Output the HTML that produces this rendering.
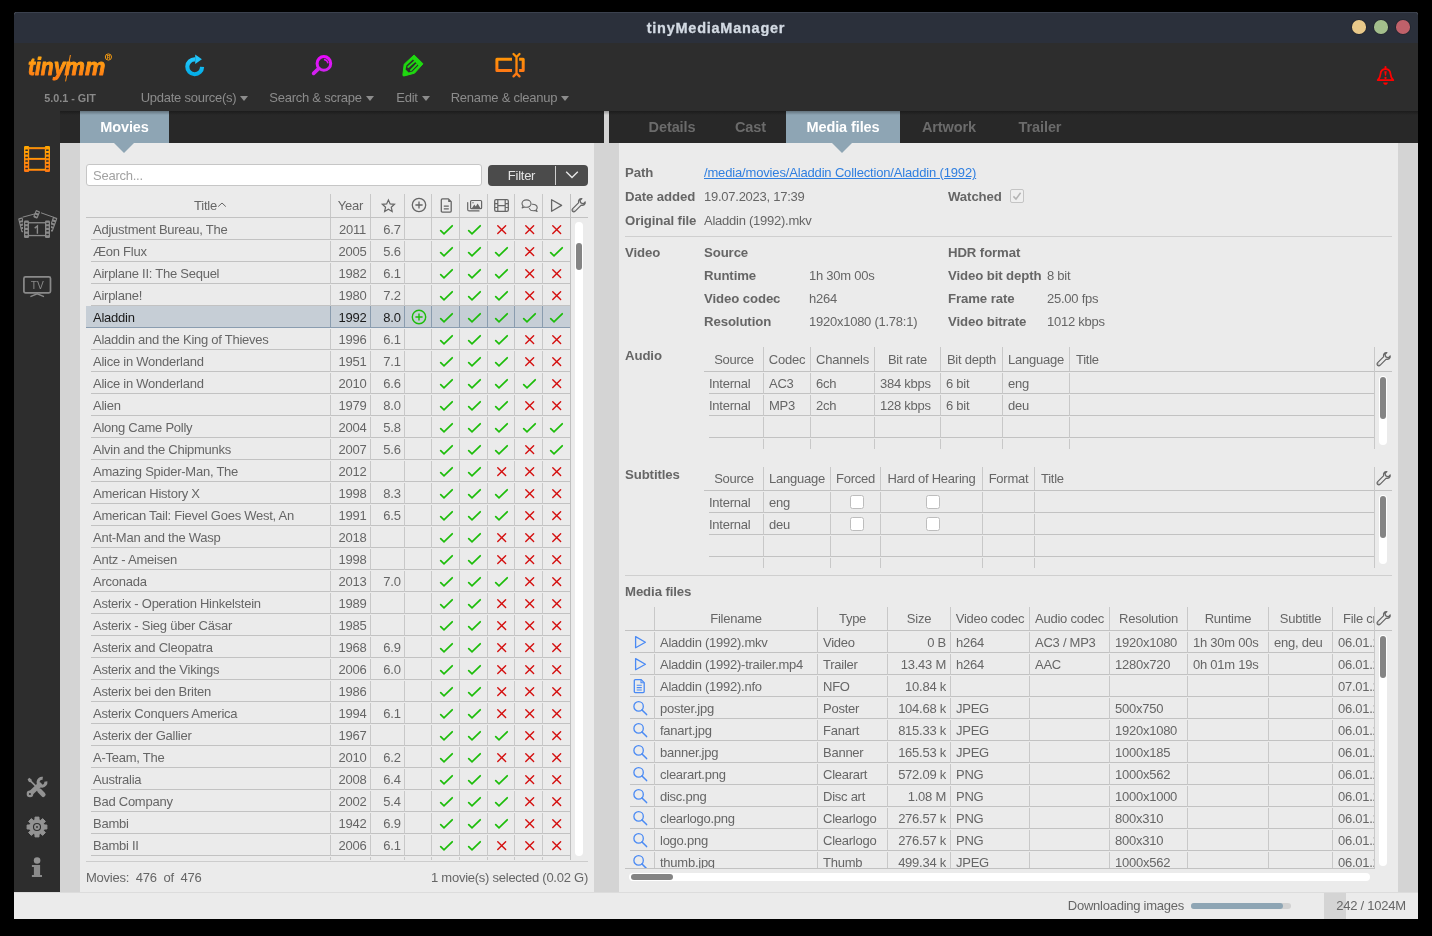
<!DOCTYPE html>
<html><head><meta charset="utf-8"><title>tinyMediaManager</title>
<style>html,body{margin:0;padding:0;background:#000}body{width:1432px;height:936px;position:relative;overflow:hidden;font-family:"Liberation Sans",sans-serif;}#r{position:absolute;left:0;top:0;width:1432px;height:936px;will-change:transform}svg{overflow:visible}</style></head>
<body><div id="r">
<div style="position:absolute;left:14px;top:12px;width:1404px;height:907px;background:#ebebeb;border-radius:3px 3px 0 0;overflow:hidden"></div>
<div style="position:absolute;left:14px;top:12px;width:1404px;height:31px;background:#2b303b;border-radius:3px 3px 0 0;box-shadow:inset 0 1px 0 #3b414e"></div>
<div style="position:absolute;left:14px;top:20px;font-size:14.5px;line-height:16px;height:16px;color:#d3dae3;font-weight:700;white-space:nowrap;letter-spacing:0.75px;width:1404px;text-align:center;overflow:hidden;-webkit-text-stroke:.3px #d3dae3;">tinyMediaManager</div>
<div style="position:absolute;left:1352.2px;top:20.3px;width:13.6px;height:13.6px;border-radius:50%;background:#e9c98a;box-shadow:0 0 0 .8px rgba(0,0,0,.22)"></div>
<div style="position:absolute;left:1374.2px;top:20.3px;width:13.6px;height:13.6px;border-radius:50%;background:#a3be8c;box-shadow:0 0 0 .8px rgba(0,0,0,.22)"></div>
<div style="position:absolute;left:1396.2px;top:20.3px;width:13.6px;height:13.6px;border-radius:50%;background:#bf616a;box-shadow:0 0 0 .8px rgba(0,0,0,.22)"></div>
<div style="position:absolute;left:14px;top:43px;width:1404px;height:68px;background:#2d2d2d;"></div>
<div style="position:absolute;left:60px;top:111px;width:1358px;height:32px;background:#282828;"></div>
<div style="position:absolute;left:14px;top:111px;width:46px;height:781px;background:#2d2d2d;"></div>
<div style="position:absolute;left:60px;top:143px;width:20px;height:749px;background:#d4d4d4;"></div>
<div style="position:absolute;left:594px;top:143px;width:25px;height:749px;background:#d4d4d4;"></div>
<div style="position:absolute;left:1398px;top:143px;width:20px;height:749px;background:#d4d4d4;"></div>
<div style="position:absolute;left:604px;top:111px;width:5px;height:32px;background:#d4d4d4;"></div>
<div style="position:absolute;left:14px;top:892px;width:1404px;height:27px;background:#ebebeb;box-shadow:inset 0 1px 0 #dcdcdc"></div>
<svg style="position:absolute;left:24px;top:48px;" width="96" height="40" viewBox="0 0 96 40"><defs><linearGradient id="lg" x1="0" y1="0" x2="0" y2="1"><stop offset="0.2" stop-color="#ffa412"/><stop offset="0.85" stop-color="#ff7d14"/></linearGradient></defs>
<g font-family="Liberation Sans" font-weight="700" font-style="italic" font-size="24.2" fill="url(#lg)" stroke="url(#lg)" stroke-width=".95" stroke-linejoin="round">
<text x="4" y="27.4" textLength="37.4" lengthAdjust="spacingAndGlyphs">tiny</text>
<text x="40.6" y="27.4" textLength="40.6" lengthAdjust="spacingAndGlyphs">mm</text></g>
<path d="M46.4 7 L41.6 33.4" stroke="#ff8f14" stroke-width="1" fill="none"/>
<circle cx="84.4" cy="9" r="3.1" fill="none" stroke="#f59a10" stroke-width="1"/><text x="82.7" y="10.9" font-family="Liberation Sans" font-size="5" font-weight="700" fill="#f59a10">R</text></svg>
<div style="position:absolute;left:14px;top:92px;font-size:10.8px;line-height:12px;height:12px;color:#8a8a8a;font-weight:700;white-space:nowrap;letter-spacing:0px;width:112px;text-align:center;overflow:hidden;">5.0.1 - GIT</div>
<div style="position:absolute;left:94.5px;top:90px;font-size:13px;line-height:15px;height:15px;color:#8c8c8c;font-weight:400;white-space:nowrap;letter-spacing:-0.25px;width:200px;text-align:center;overflow:hidden;">Update source(s)<span style="display:inline-block;width:0;height:0;border-left:4.9px solid transparent;border-right:4.9px solid transparent;border-top:5.8px solid #8c8c8c;margin-left:4px;vertical-align:0.6px"></span></div>
<div style="position:absolute;left:221.5px;top:90px;font-size:13px;line-height:15px;height:15px;color:#8c8c8c;font-weight:400;white-space:nowrap;letter-spacing:-0.25px;width:200px;text-align:center;overflow:hidden;">Search &amp; scrape<span style="display:inline-block;width:0;height:0;border-left:4.9px solid transparent;border-right:4.9px solid transparent;border-top:5.8px solid #8c8c8c;margin-left:4px;vertical-align:0.6px"></span></div>
<div style="position:absolute;left:313px;top:90px;font-size:13px;line-height:15px;height:15px;color:#8c8c8c;font-weight:400;white-space:nowrap;letter-spacing:-0.25px;width:200px;text-align:center;overflow:hidden;">Edit<span style="display:inline-block;width:0;height:0;border-left:4.9px solid transparent;border-right:4.9px solid transparent;border-top:5.8px solid #8c8c8c;margin-left:4px;vertical-align:0.6px"></span></div>
<div style="position:absolute;left:410px;top:90px;font-size:13px;line-height:15px;height:15px;color:#8c8c8c;font-weight:400;white-space:nowrap;letter-spacing:-0.25px;width:200px;text-align:center;overflow:hidden;">Rename &amp; cleanup<span style="display:inline-block;width:0;height:0;border-left:4.9px solid transparent;border-right:4.9px solid transparent;border-top:5.8px solid #8c8c8c;margin-left:4px;vertical-align:0.6px"></span></div>
<svg style="position:absolute;left:182px;top:52px;" width="28" height="28" viewBox="0 0 28 28"><defs><linearGradient id="gb" x1="0" y1="0" x2="0" y2="1"><stop offset="0" stop-color="#22c6fb"/><stop offset="1" stop-color="#04aee8"/></linearGradient></defs>
<path d="M20.1 14.9 A7.4 7.4 0 1 1 13 7.4" fill="none" stroke="url(#gb)" stroke-width="4.1"/>
<path d="M13.2 2.6 L19.9 7.3 L13.2 12.1 Z" fill="#1fc4fa"/></svg>
<svg style="position:absolute;left:308px;top:50px;" width="30" height="30" viewBox="0 0 30 30"><defs><linearGradient id="gm" x1="0" y1="0" x2="0" y2="1"><stop offset="0" stop-color="#ea08ff"/><stop offset="1" stop-color="#cf22ee"/></linearGradient></defs>
<circle cx="15.9" cy="13.4" r="6.8" fill="none" stroke="url(#gm)" stroke-width="3"/>
<path d="M10.6 18.6 L5.6 23.4" stroke="#d320f0" stroke-width="3.6" stroke-linecap="round" fill="none"/>
<path d="M16.6 9.6 A4 4 0 0 1 19.8 12.6" stroke="#e210fa" stroke-width="1.6" stroke-linecap="round" fill="none"/></svg>
<svg style="position:absolute;left:398px;top:50px;" width="30" height="30" viewBox="0 0 30 30"><path d="M16.1 5 L25 13.8 L16.5 23.2 L6.3 25.9 C5.3 26.2 4.7 25.6 4.9 24.7 L6.2 14.2 Z" fill="#1fd810" stroke="#1fd810" stroke-width="1" stroke-linejoin="round"/>
<path d="M14.9 9.6 L20.4 15.4 L14.4 21.4 L10.6 22.4 L7.6 19.4 L8.4 15.6 Z" fill="#2d2d2d"/>
<path d="M10.2 17 L16.4 11.6 M13 20.2 L18.6 14.4" stroke="#1fd810" stroke-width="1.9" stroke-linecap="round" fill="none"/></svg>
<svg style="position:absolute;left:490px;top:48px;" width="40" height="34" viewBox="0 0 40 34"><defs><linearGradient id="go" x1="0" y1="0" x2="0" y2="1"><stop offset="0" stop-color="#ff9208"/><stop offset="1" stop-color="#ff7a14"/></linearGradient></defs>
<path d="M22 11.3 H6.9 V22.6 H22" fill="none" stroke="url(#go)" stroke-width="3" stroke-linejoin="round"/>
<path d="M27 11.3 H33.2 V22.6 H27" fill="none" stroke="url(#go)" stroke-width="3" stroke-linejoin="round"/>
<path d="M26.5 8 V26" stroke="#2d2d2d" stroke-width="5.2" fill="none"/>
<path d="M23.5 6 L26.5 9 L29.5 6 M26.5 9 V25.5 M23.5 28.4 L26.5 25.4 L29.5 28.4" fill="none" stroke="url(#go)" stroke-width="2.3" stroke-linecap="round" stroke-linejoin="round"/></svg>
<svg style="position:absolute;left:1365px;top:55px;" width="40" height="40" viewBox="0 0 40 40"><path d="M12.7 25.1 C14.5 23.3 15.3 21.6 15.5 19 C15.7 15.9 17.5 14.1 20.5 14.1 C23.5 14.1 25.3 15.9 25.5 19 C25.7 21.6 26.5 23.3 28.3 25.1 Z" fill="none" stroke="#ff0000" stroke-width="1.8" stroke-linejoin="round"/>
<path d="M20.5 11.9 V14" stroke="#ff0000" stroke-width="2" stroke-linecap="round"/>
<path d="M18.1 27.4 H22.9 C22.6 29 21.6 29.8 20.5 29.8 C19.4 29.8 18.4 29 18.1 27.4 Z" fill="#ff0000"/>
<path d="M19.3 16.2 H21.7 L21.1 20.7 H19.9 Z" fill="#ff0000"/><circle cx="20.5" cy="23" r="1.15" fill="#ff0000"/></svg>
<svg style="position:absolute;left:24px;top:146px;" width="26" height="26" viewBox="0 0 26 26"><defs><linearGradient id="gf" x1="0" y1="0" x2="0" y2="1"><stop offset="0" stop-color="#ffa800"/><stop offset="1" stop-color="#ff7712"/></linearGradient></defs>
<rect x="0" y="0" width="5.2" height="26" rx="1.2" fill="url(#gf)"/><rect x="20.8" y="0" width="5.2" height="26" rx="1.2" fill="url(#gf)"/>
<rect x="4" y="1.2" width="18" height="2" fill="url(#gf)"/><rect x="4" y="11.9" width="18" height="2" fill="url(#gf)"/><rect x="4" y="22.8" width="18" height="2" fill="url(#gf)"/><rect x="1.3" y="3.40" width="2.6" height="1.5" rx=".4" fill="#2d2d2d"/><rect x="22.1" y="3.40" width="2.6" height="1.5" rx=".4" fill="#2d2d2d"/><rect x="1.3" y="7.05" width="2.6" height="1.5" rx=".4" fill="#2d2d2d"/><rect x="22.1" y="7.05" width="2.6" height="1.5" rx=".4" fill="#2d2d2d"/><rect x="1.3" y="10.70" width="2.6" height="1.5" rx=".4" fill="#2d2d2d"/><rect x="22.1" y="10.70" width="2.6" height="1.5" rx=".4" fill="#2d2d2d"/><rect x="1.3" y="14.35" width="2.6" height="1.5" rx=".4" fill="#2d2d2d"/><rect x="22.1" y="14.35" width="2.6" height="1.5" rx=".4" fill="#2d2d2d"/><rect x="1.3" y="18.00" width="2.6" height="1.5" rx=".4" fill="#2d2d2d"/><rect x="22.1" y="18.00" width="2.6" height="1.5" rx=".4" fill="#2d2d2d"/><rect x="1.3" y="21.65" width="2.6" height="1.5" rx=".4" fill="#2d2d2d"/><rect x="22.1" y="21.65" width="2.6" height="1.5" rx=".4" fill="#2d2d2d"/></svg>
<svg style="position:absolute;left:16px;top:206px;" width="46" height="36" viewBox="0 0 46 36"><g transform="translate(2,12.4) rotate(-14)"><rect x="0" y="0" width="4.6" height="14.6" rx="1" fill="#8a8a8a"/><rect x="1.1" y="1.30" width="2.4" height="1.4" fill="#2d2d2d"/><rect x="1.1" y="4.70" width="2.4" height="1.4" fill="#2d2d2d"/><rect x="1.1" y="8.10" width="2.4" height="1.4" fill="#2d2d2d"/><rect x="1.1" y="11.50" width="2.4" height="1.4" fill="#2d2d2d"/></g>
<g transform="translate(37.2,10.6) rotate(20)"><rect x="0" y="0" width="4.6" height="14.6" rx="1" fill="#8a8a8a"/><rect x="1.1" y="1.30" width="2.4" height="1.4" fill="#2d2d2d"/><rect x="1.1" y="4.70" width="2.4" height="1.4" fill="#2d2d2d"/><rect x="1.1" y="8.10" width="2.4" height="1.4" fill="#2d2d2d"/><rect x="1.1" y="11.50" width="2.4" height="1.4" fill="#2d2d2d"/></g>
<g transform="translate(20,3.8) rotate(22)"><rect x="0" y="0" width="4.6" height="7.8" rx="1" fill="#8a8a8a"/><rect x="1.1" y="1.30" width="2.4" height="1.4" fill="#2d2d2d"/><rect x="1.1" y="4.70" width="2.4" height="1.4" fill="#2d2d2d"/></g>
<path d="M6.5 11.2 L20 7.6 M25 6.8 L38 11.4" stroke="#8a8a8a" stroke-width="1" fill="none"/>
<g transform="translate(8,14.5)"><rect x="-1" y="-1" width="28" height="19.4" fill="#2d2d2d"/><rect x="0" y="0" width="5" height="17.4" rx="1.2" fill="#8a8a8a"/><rect x="21" y="0" width="5" height="17.4" rx="1.2" fill="#8a8a8a"/><rect x="4" y="1.6" width="18" height="1.3" fill="#8a8a8a"/><rect x="4" y="14.4" width="18" height="1.3" fill="#8a8a8a"/><rect x="1.2" y="2.20" width="2.5" height="1.5" rx=".4" fill="#2d2d2d"/><rect x="22.3" y="2.20" width="2.5" height="1.5" rx=".4" fill="#2d2d2d"/><rect x="1.2" y="5.85" width="2.5" height="1.5" rx=".4" fill="#2d2d2d"/><rect x="22.3" y="5.85" width="2.5" height="1.5" rx=".4" fill="#2d2d2d"/><rect x="1.2" y="9.50" width="2.5" height="1.5" rx=".4" fill="#2d2d2d"/><rect x="22.3" y="9.50" width="2.5" height="1.5" rx=".4" fill="#2d2d2d"/><rect x="1.2" y="13.15" width="2.5" height="1.5" rx=".4" fill="#2d2d2d"/><rect x="22.3" y="13.15" width="2.5" height="1.5" rx=".4" fill="#2d2d2d"/>
<path d="M10.7 7.6 L13.4 5.4 V13.2" fill="none" stroke="#8a8a8a" stroke-width="1.4"/></g></svg>
<svg style="position:absolute;left:20px;top:272px;" width="36" height="30" viewBox="0 0 36 30"><rect x="3.9" y="4.9" width="26.6" height="15.9" rx="1.6" fill="none" stroke="#8a8a8a" stroke-width="1.7"/>
<text x="17.2" y="17.1" text-anchor="middle" font-family="Liberation Sans" font-size="10.2" fill="#8a8a8a">TV</text>
<path d="M17.2 20.8 V22.2 M10.4 24.6 L17.2 21.8 L24 24.6" fill="none" stroke="#8a8a8a" stroke-width="1.3"/></svg>
<svg style="position:absolute;left:24px;top:774px;" width="26" height="26" viewBox="0 0 26 26"><path d="M3.6 5.4 L5.2 3.8 L7.6 5.4 L7.8 7 L12.4 11.6 L11.2 12.8 L6.6 8.2 L5 8 Z" fill="#929292"/>
<path d="M15.4 16.6 L19.3 20.7" stroke="#929292" stroke-width="4.6" stroke-linecap="round" fill="none"/>
<path d="M12.2 13.2 L15.4 16.6" stroke="#929292" stroke-width="2.4" fill="none"/>
<path d="M6.1 19.8 L15.6 10.9" stroke="#929292" stroke-width="4.9" stroke-linecap="round" fill="none"/>
<circle cx="6.0" cy="19.9" r="3.3" fill="#929292"/>
<path d="M21.84 7.52 A3.9 3.9 0 1 1 18.68 4.36" fill="none" stroke="#929292" stroke-width="3.1" stroke-linecap="butt"/>
<circle cx="5.9" cy="20" r="1.05" fill="#2d2d2d"/></svg>
<svg style="position:absolute;left:24px;top:814px;" width="26" height="26" viewBox="0 0 26 26"><polygon points="10.99,3.10 15.01,3.10 15.00,5.77 16.70,6.47 18.58,4.58 21.42,7.42 19.53,9.30 20.23,11.00 22.90,10.99 22.90,15.01 20.23,15.00 19.53,16.70 21.42,18.58 18.58,21.42 16.70,19.53 15.00,20.23 15.01,22.90 10.99,22.90 11.00,20.23 9.30,19.53 7.42,21.42 4.58,18.58 6.47,16.70 5.77,15.00 3.10,15.01 3.10,10.99 5.77,11.00 6.47,9.30 4.58,7.42 7.42,4.58 9.30,6.47 11.00,5.77" fill="#929292" stroke="#929292" stroke-width="1" stroke-linejoin="round"/>
<circle cx="13" cy="13" r="3.5" fill="none" stroke="#2d2d2d" stroke-width="1.1"/><circle cx="13" cy="13" r="0.9" fill="#2d2d2d"/></svg>
<svg style="position:absolute;left:28px;top:855px;" width="20" height="26" viewBox="0 0 20 26"><circle cx="9.1" cy="5.5" r="3.3" fill="#929292"/><path d="M3.9 10.1 H12.1 V19.9 H14 V21.9 H3.9 V19.9 H5.9 V12 H3.9 Z" fill="#8a8a8a"/></svg>
<div style="position:absolute;left:80px;top:111px;width:89px;height:32px;background:#8ea5b4;"></div>
<div style="position:absolute;left:113.8px;top:143px;width:0;height:0;border-left:10px solid transparent;border-right:10px solid transparent;border-top:10px solid #8ea5b4"></div>
<div style="position:absolute;left:80px;top:119px;font-size:14.5px;line-height:16px;height:16px;color:#ffffff;font-weight:700;white-space:nowrap;letter-spacing:-0.1px;width:89px;text-align:center;overflow:hidden;">Movies</div>
<div style="position:absolute;left:629px;top:119px;font-size:14.5px;line-height:16px;height:16px;color:#6b6b6b;font-weight:700;white-space:nowrap;letter-spacing:-0.1px;width:86px;text-align:center;overflow:hidden;">Details</div>
<div style="position:absolute;left:715px;top:119px;font-size:14.5px;line-height:16px;height:16px;color:#6b6b6b;font-weight:700;white-space:nowrap;letter-spacing:-0.1px;width:71px;text-align:center;overflow:hidden;">Cast</div>
<div style="position:absolute;left:786px;top:111px;width:114px;height:32px;background:#8ea5b4;"></div>
<div style="position:absolute;left:832.3px;top:143px;width:0;height:0;border-left:10px solid transparent;border-right:10px solid transparent;border-top:10px solid #8ea5b4"></div>
<div style="position:absolute;left:786px;top:119px;font-size:14.5px;line-height:16px;height:16px;color:#ffffff;font-weight:700;white-space:nowrap;letter-spacing:-0.1px;width:114px;text-align:center;overflow:hidden;">Media files</div>
<div style="position:absolute;left:900px;top:119px;font-size:14.5px;line-height:16px;height:16px;color:#6b6b6b;font-weight:700;white-space:nowrap;letter-spacing:-0.1px;width:98px;text-align:center;overflow:hidden;">Artwork</div>
<div style="position:absolute;left:998px;top:119px;font-size:14.5px;line-height:16px;height:16px;color:#6b6b6b;font-weight:700;white-space:nowrap;letter-spacing:-0.1px;width:84px;text-align:center;overflow:hidden;">Trailer</div>
<div style="position:absolute;left:60px;top:111px;width:1358px;height:4px;background:linear-gradient(rgba(0,0,0,.3),rgba(0,0,0,0))"></div>
<div style="position:absolute;left:86px;top:164px;width:396px;height:22px;box-sizing:border-box;background:#fff;border:1px solid #c6c6c6;border-radius:3px"></div>
<div style="position:absolute;left:93px;top:168px;font-size:13px;line-height:15px;height:15px;color:#a2a2a2;font-weight:400;white-space:nowrap;letter-spacing:-0.25px;">Search...</div>
<div style="position:absolute;left:488px;top:165px;width:100px;height:21px;background:#4b4b4b;border-radius:4px"></div>
<div style="position:absolute;left:555px;top:166px;width:1px;height:19px;background:#cfcfcf;"></div>
<div style="position:absolute;left:488px;top:168px;font-size:13px;line-height:15px;height:15px;color:#e4e4e4;font-weight:400;white-space:nowrap;letter-spacing:-0.25px;width:67px;text-align:center;overflow:hidden;">Filter</div>
<svg style="position:absolute;left:563px;top:168px;" width="18" height="14" viewBox="0 0 18 14"><path d="M3.2 3.8 L9 9.6 L14.8 3.8" fill="none" stroke="#e6e6e6" stroke-width="1.4"/></svg>
<div style="position:absolute;left:86px;top:217px;width:502px;height:1px;background:#c2c2c2;"></div>
<div style="position:absolute;left:330px;top:194px;width:1px;height:23px;background:#c8c8c8;"></div>
<div style="position:absolute;left:370px;top:194px;width:1px;height:23px;background:#c8c8c8;"></div>
<div style="position:absolute;left:404px;top:194px;width:1px;height:23px;background:#c8c8c8;"></div>
<div style="position:absolute;left:431px;top:194px;width:1px;height:23px;background:#c8c8c8;"></div>
<div style="position:absolute;left:459px;top:194px;width:1px;height:23px;background:#c8c8c8;"></div>
<div style="position:absolute;left:487px;top:194px;width:1px;height:23px;background:#c8c8c8;"></div>
<div style="position:absolute;left:514px;top:194px;width:1px;height:23px;background:#c8c8c8;"></div>
<div style="position:absolute;left:542px;top:194px;width:1px;height:23px;background:#c8c8c8;"></div>
<div style="position:absolute;left:570px;top:194px;width:1px;height:23px;background:#c8c8c8;"></div>
<div style="position:absolute;left:88px;top:198px;font-size:13px;line-height:15px;height:15px;color:#666666;font-weight:400;white-space:nowrap;letter-spacing:-0.25px;width:244px;text-align:center;overflow:hidden;">Title<span style="display:inline-block;width:9px"></span></div>
<svg style="position:absolute;left:216.5px;top:200px;" width="10" height="10" viewBox="0 0 10 10"><path d="M1.2 6.6 L5 3 L8.8 6.6" fill="none" stroke="#666666" stroke-width="1"/></svg>
<div style="position:absolute;left:331px;top:198px;font-size:13px;line-height:15px;height:15px;color:#666666;font-weight:400;white-space:nowrap;letter-spacing:-0.25px;width:39px;text-align:center;overflow:hidden;">Year</div>
<svg style="position:absolute;left:379px;top:196px;" width="18" height="18" viewBox="0 0 18 18"><polygon points="9.40,3.90 11.16,7.87 15.49,8.32 12.25,11.23 13.16,15.48 9.40,13.30 5.64,15.48 6.55,11.23 3.31,8.32 7.64,7.87" fill="none" stroke="#666666" stroke-width="1.2" stroke-linejoin="miter"/></svg>
<svg style="position:absolute;left:409.5px;top:196.4px;" width="18" height="18" viewBox="0 0 18 18"><circle cx="9" cy="9" r="6.7" fill="none" stroke="#666666" stroke-width="1.3"/><path d="M5.4 9H12.6M9 5.4V12.6" stroke="#666666" stroke-width="1.3" fill="none"/></svg>
<svg style="position:absolute;left:439px;top:196px;" width="16" height="18" viewBox="0 0 16 18"><path d="M3.4 2.9 H9.4 L12.2 5.7 V15 C12.2 15.7 11.8 16.1 11.1 16.1 H3.4 C2.7 16.1 2.3 15.7 2.3 15 V4 C2.3 3.3 2.7 2.9 3.4 2.9 Z" fill="none" stroke="#666666" stroke-width="1.3" stroke-linejoin="round"/><path d="M9.2 2.9 V6 H12.2 Z" fill="#666666"/><path d="M4.8 10.2 H9.8 M4.8 12.9 H9.8" stroke="#666666" stroke-width="1.3"/></svg>
<svg style="position:absolute;left:465px;top:197px;" width="20" height="17" viewBox="0 0 20 17"><rect x="5.6" y="3.5" width="11" height="8.2" rx="1" fill="none" stroke="#666666" stroke-width="1.2"/><path d="M7 10.9 L9.3 7.6 L10.8 9.4 L12.6 6.6 L15.4 10.9 Z" fill="#666666"/><circle cx="8" cy="5.8" r=".7" fill="#666666"/><path d="M2.7 5.6 V12.4 C2.7 13.4 3.3 13.9 4.2 13.9 H14" fill="none" stroke="#666666" stroke-width="1.2" stroke-linecap="round"/></svg>
<svg style="position:absolute;left:492px;top:197px;" width="19" height="17" viewBox="0 0 19 17"><rect x="2.7" y="2.7" width="13.6" height="11.7" rx="1.4" fill="none" stroke="#666666" stroke-width="1.3"/><path d="M5.8 2.7 V14.4 M13.2 2.7 V14.4 M2.7 6.6 H5.8 M2.7 10.5 H5.8 M13.2 6.6 H16.3 M13.2 10.5 H16.3 M5.8 8.55 H13.2" stroke="#666666" stroke-width="1.2" fill="none"/></svg>
<svg style="position:absolute;left:519px;top:197px;" width="22" height="18" viewBox="0 0 22 18"><path d="M7.5 2.9 C10 2.9 12 4.5 12 6.6 C12 8.7 10 10.3 7.5 10.3 C6.7 10.3 6 10.2 5.4 9.9 L3.1 10.9 L4.1 9 C3.4 8.4 3 7.5 3 6.6 C3 4.5 5 2.9 7.5 2.9 Z" fill="none" stroke="#666666" stroke-width="1.1" stroke-linejoin="round"/><path d="M13.2 7.2 C15.8 7 18.2 8.4 18.2 10.5 C18.2 11.4 17.8 12.2 17.2 12.7 L18.1 14.5 L15.9 13.6 C15.4 13.8 14.9 13.8 14.4 13.8 C12.6 13.8 11 13 10.4 11.6" fill="none" stroke="#666666" stroke-width="1.1" stroke-linejoin="round" stroke-linecap="round"/></svg>
<svg style="position:absolute;left:547px;top:196px;" width="18" height="18" viewBox="0 0 18 18"><path d="M4.6 3.7 L14.6 9.4 L4.6 15.2 Z" fill="none" stroke="#666666" stroke-width="1.3" stroke-linejoin="round"/></svg>
<svg style="position:absolute;left:571.3px;top:196.9px;" width="16" height="16" viewBox="0 0 16 16"><path d="M10.9 1.6 C8.6 1.2 6.9 3.4 7.7 5.6 L1.7 11.6 C0.9 12.4 0.9 13.5 1.6 14.2 C2.3 14.9 3.4 14.9 4.2 14.1 L10.2 8.1 C12.4 8.9 14.6 7.2 14.2 4.9 L12.2 6.9 L9.9 5.9 L8.9 3.6 Z" fill="none" stroke="#666666" stroke-width="1.25" stroke-linejoin="round"/><circle cx="2.9" cy="12.9" r="0.5" fill="#666666"/></svg>
<div style="position:absolute;left:91px;top:239px;width:479px;height:1px;background:#c2c2c2;"></div>
<div style="position:absolute;left:330px;top:218px;width:1px;height:22px;background:#c8c8c8;"></div>
<div style="position:absolute;left:370px;top:218px;width:1px;height:22px;background:#c8c8c8;"></div>
<div style="position:absolute;left:404px;top:218px;width:1px;height:22px;background:#c8c8c8;"></div>
<div style="position:absolute;left:431px;top:218px;width:1px;height:22px;background:#c8c8c8;"></div>
<div style="position:absolute;left:459px;top:218px;width:1px;height:22px;background:#c8c8c8;"></div>
<div style="position:absolute;left:487px;top:218px;width:1px;height:22px;background:#c8c8c8;"></div>
<div style="position:absolute;left:514px;top:218px;width:1px;height:22px;background:#c8c8c8;"></div>
<div style="position:absolute;left:542px;top:218px;width:1px;height:22px;background:#c8c8c8;"></div>
<div style="position:absolute;left:93px;top:222px;font-size:13px;line-height:15px;height:15px;color:#666666;font-weight:400;white-space:nowrap;letter-spacing:-0.25px;width:236px;text-align:left;overflow:hidden;">Adjustment Bureau, The</div>
<div style="position:absolute;left:333px;top:222px;font-size:13px;line-height:15px;height:15px;color:#666666;font-weight:400;white-space:nowrap;letter-spacing:-0.25px;width:39px;text-align:center;overflow:hidden;">2011</div>
<div style="position:absolute;left:371px;top:222px;font-size:13px;line-height:15px;height:15px;color:#666666;font-weight:400;white-space:nowrap;letter-spacing:-0.25px;width:33px;text-align:center;overflow:hidden;padding-left:9px;box-sizing:border-box;">6.7</div>
<svg style="position:absolute;left:439px;top:218px" width="16" height="22" viewBox="0 0 16 22"><path d="M1.7 12.7 L5 15.8 L13.2 7.8" fill="none" stroke="#1cbd0a" stroke-width="1.75" stroke-linecap="round" stroke-linejoin="miter"/></svg>
<svg style="position:absolute;left:467px;top:218px" width="16" height="22" viewBox="0 0 16 22"><path d="M1.7 12.7 L5 15.8 L13.2 7.8" fill="none" stroke="#1cbd0a" stroke-width="1.75" stroke-linecap="round" stroke-linejoin="miter"/></svg>
<svg style="position:absolute;left:494px;top:218px" width="16" height="22" viewBox="0 0 16 22"><path d="M3.75 7.65 L11.65 15.55 M11.65 7.65 L3.75 15.55" fill="none" stroke="#d40f0f" stroke-width="1.4" stroke-linecap="round"/></svg>
<svg style="position:absolute;left:522px;top:218px" width="16" height="22" viewBox="0 0 16 22"><path d="M3.75 7.65 L11.65 15.55 M11.65 7.65 L3.75 15.55" fill="none" stroke="#d40f0f" stroke-width="1.4" stroke-linecap="round"/></svg>
<svg style="position:absolute;left:549px;top:218px" width="16" height="22" viewBox="0 0 16 22"><path d="M3.75 7.65 L11.65 15.55 M11.65 7.65 L3.75 15.55" fill="none" stroke="#d40f0f" stroke-width="1.4" stroke-linecap="round"/></svg>
<div style="position:absolute;left:91px;top:261px;width:479px;height:1px;background:#c2c2c2;"></div>
<div style="position:absolute;left:330px;top:241px;width:1px;height:21px;background:#c8c8c8;"></div>
<div style="position:absolute;left:370px;top:241px;width:1px;height:21px;background:#c8c8c8;"></div>
<div style="position:absolute;left:404px;top:241px;width:1px;height:21px;background:#c8c8c8;"></div>
<div style="position:absolute;left:431px;top:241px;width:1px;height:21px;background:#c8c8c8;"></div>
<div style="position:absolute;left:459px;top:241px;width:1px;height:21px;background:#c8c8c8;"></div>
<div style="position:absolute;left:487px;top:241px;width:1px;height:21px;background:#c8c8c8;"></div>
<div style="position:absolute;left:514px;top:241px;width:1px;height:21px;background:#c8c8c8;"></div>
<div style="position:absolute;left:542px;top:241px;width:1px;height:21px;background:#c8c8c8;"></div>
<div style="position:absolute;left:93px;top:244px;font-size:13px;line-height:15px;height:15px;color:#666666;font-weight:400;white-space:nowrap;letter-spacing:-0.25px;width:236px;text-align:left;overflow:hidden;">Æon Flux</div>
<div style="position:absolute;left:333px;top:244px;font-size:13px;line-height:15px;height:15px;color:#666666;font-weight:400;white-space:nowrap;letter-spacing:-0.25px;width:39px;text-align:center;overflow:hidden;">2005</div>
<div style="position:absolute;left:371px;top:244px;font-size:13px;line-height:15px;height:15px;color:#666666;font-weight:400;white-space:nowrap;letter-spacing:-0.25px;width:33px;text-align:center;overflow:hidden;padding-left:9px;box-sizing:border-box;">5.6</div>
<svg style="position:absolute;left:439px;top:240px" width="16" height="22" viewBox="0 0 16 22"><path d="M1.7 12.7 L5 15.8 L13.2 7.8" fill="none" stroke="#1cbd0a" stroke-width="1.75" stroke-linecap="round" stroke-linejoin="miter"/></svg>
<svg style="position:absolute;left:467px;top:240px" width="16" height="22" viewBox="0 0 16 22"><path d="M1.7 12.7 L5 15.8 L13.2 7.8" fill="none" stroke="#1cbd0a" stroke-width="1.75" stroke-linecap="round" stroke-linejoin="miter"/></svg>
<svg style="position:absolute;left:494px;top:240px" width="16" height="22" viewBox="0 0 16 22"><path d="M1.7 12.7 L5 15.8 L13.2 7.8" fill="none" stroke="#1cbd0a" stroke-width="1.75" stroke-linecap="round" stroke-linejoin="miter"/></svg>
<svg style="position:absolute;left:522px;top:240px" width="16" height="22" viewBox="0 0 16 22"><path d="M3.75 7.65 L11.65 15.55 M11.65 7.65 L3.75 15.55" fill="none" stroke="#d40f0f" stroke-width="1.4" stroke-linecap="round"/></svg>
<svg style="position:absolute;left:549px;top:240px" width="16" height="22" viewBox="0 0 16 22"><path d="M1.7 12.7 L5 15.8 L13.2 7.8" fill="none" stroke="#1cbd0a" stroke-width="1.75" stroke-linecap="round" stroke-linejoin="miter"/></svg>
<div style="position:absolute;left:91px;top:283px;width:479px;height:1px;background:#c2c2c2;"></div>
<div style="position:absolute;left:330px;top:263px;width:1px;height:21px;background:#c8c8c8;"></div>
<div style="position:absolute;left:370px;top:263px;width:1px;height:21px;background:#c8c8c8;"></div>
<div style="position:absolute;left:404px;top:263px;width:1px;height:21px;background:#c8c8c8;"></div>
<div style="position:absolute;left:431px;top:263px;width:1px;height:21px;background:#c8c8c8;"></div>
<div style="position:absolute;left:459px;top:263px;width:1px;height:21px;background:#c8c8c8;"></div>
<div style="position:absolute;left:487px;top:263px;width:1px;height:21px;background:#c8c8c8;"></div>
<div style="position:absolute;left:514px;top:263px;width:1px;height:21px;background:#c8c8c8;"></div>
<div style="position:absolute;left:542px;top:263px;width:1px;height:21px;background:#c8c8c8;"></div>
<div style="position:absolute;left:93px;top:266px;font-size:13px;line-height:15px;height:15px;color:#666666;font-weight:400;white-space:nowrap;letter-spacing:-0.25px;width:236px;text-align:left;overflow:hidden;">Airplane II: The Sequel</div>
<div style="position:absolute;left:333px;top:266px;font-size:13px;line-height:15px;height:15px;color:#666666;font-weight:400;white-space:nowrap;letter-spacing:-0.25px;width:39px;text-align:center;overflow:hidden;">1982</div>
<div style="position:absolute;left:371px;top:266px;font-size:13px;line-height:15px;height:15px;color:#666666;font-weight:400;white-space:nowrap;letter-spacing:-0.25px;width:33px;text-align:center;overflow:hidden;padding-left:9px;box-sizing:border-box;">6.1</div>
<svg style="position:absolute;left:439px;top:262px" width="16" height="22" viewBox="0 0 16 22"><path d="M1.7 12.7 L5 15.8 L13.2 7.8" fill="none" stroke="#1cbd0a" stroke-width="1.75" stroke-linecap="round" stroke-linejoin="miter"/></svg>
<svg style="position:absolute;left:467px;top:262px" width="16" height="22" viewBox="0 0 16 22"><path d="M1.7 12.7 L5 15.8 L13.2 7.8" fill="none" stroke="#1cbd0a" stroke-width="1.75" stroke-linecap="round" stroke-linejoin="miter"/></svg>
<svg style="position:absolute;left:494px;top:262px" width="16" height="22" viewBox="0 0 16 22"><path d="M1.7 12.7 L5 15.8 L13.2 7.8" fill="none" stroke="#1cbd0a" stroke-width="1.75" stroke-linecap="round" stroke-linejoin="miter"/></svg>
<svg style="position:absolute;left:522px;top:262px" width="16" height="22" viewBox="0 0 16 22"><path d="M3.75 7.65 L11.65 15.55 M11.65 7.65 L3.75 15.55" fill="none" stroke="#d40f0f" stroke-width="1.4" stroke-linecap="round"/></svg>
<svg style="position:absolute;left:549px;top:262px" width="16" height="22" viewBox="0 0 16 22"><path d="M3.75 7.65 L11.65 15.55 M11.65 7.65 L3.75 15.55" fill="none" stroke="#d40f0f" stroke-width="1.4" stroke-linecap="round"/></svg>
<div style="position:absolute;left:91px;top:305px;width:479px;height:1px;background:#c2c2c2;"></div>
<div style="position:absolute;left:330px;top:285px;width:1px;height:21px;background:#c8c8c8;"></div>
<div style="position:absolute;left:370px;top:285px;width:1px;height:21px;background:#c8c8c8;"></div>
<div style="position:absolute;left:404px;top:285px;width:1px;height:21px;background:#c8c8c8;"></div>
<div style="position:absolute;left:431px;top:285px;width:1px;height:21px;background:#c8c8c8;"></div>
<div style="position:absolute;left:459px;top:285px;width:1px;height:21px;background:#c8c8c8;"></div>
<div style="position:absolute;left:487px;top:285px;width:1px;height:21px;background:#c8c8c8;"></div>
<div style="position:absolute;left:514px;top:285px;width:1px;height:21px;background:#c8c8c8;"></div>
<div style="position:absolute;left:542px;top:285px;width:1px;height:21px;background:#c8c8c8;"></div>
<div style="position:absolute;left:93px;top:288px;font-size:13px;line-height:15px;height:15px;color:#666666;font-weight:400;white-space:nowrap;letter-spacing:-0.25px;width:236px;text-align:left;overflow:hidden;">Airplane!</div>
<div style="position:absolute;left:333px;top:288px;font-size:13px;line-height:15px;height:15px;color:#666666;font-weight:400;white-space:nowrap;letter-spacing:-0.25px;width:39px;text-align:center;overflow:hidden;">1980</div>
<div style="position:absolute;left:371px;top:288px;font-size:13px;line-height:15px;height:15px;color:#666666;font-weight:400;white-space:nowrap;letter-spacing:-0.25px;width:33px;text-align:center;overflow:hidden;padding-left:9px;box-sizing:border-box;">7.2</div>
<svg style="position:absolute;left:439px;top:284px" width="16" height="22" viewBox="0 0 16 22"><path d="M1.7 12.7 L5 15.8 L13.2 7.8" fill="none" stroke="#1cbd0a" stroke-width="1.75" stroke-linecap="round" stroke-linejoin="miter"/></svg>
<svg style="position:absolute;left:467px;top:284px" width="16" height="22" viewBox="0 0 16 22"><path d="M1.7 12.7 L5 15.8 L13.2 7.8" fill="none" stroke="#1cbd0a" stroke-width="1.75" stroke-linecap="round" stroke-linejoin="miter"/></svg>
<svg style="position:absolute;left:494px;top:284px" width="16" height="22" viewBox="0 0 16 22"><path d="M1.7 12.7 L5 15.8 L13.2 7.8" fill="none" stroke="#1cbd0a" stroke-width="1.75" stroke-linecap="round" stroke-linejoin="miter"/></svg>
<svg style="position:absolute;left:522px;top:284px" width="16" height="22" viewBox="0 0 16 22"><path d="M3.75 7.65 L11.65 15.55 M11.65 7.65 L3.75 15.55" fill="none" stroke="#d40f0f" stroke-width="1.4" stroke-linecap="round"/></svg>
<svg style="position:absolute;left:549px;top:284px" width="16" height="22" viewBox="0 0 16 22"><path d="M3.75 7.65 L11.65 15.55 M11.65 7.65 L3.75 15.55" fill="none" stroke="#d40f0f" stroke-width="1.4" stroke-linecap="round"/></svg>
<div style="position:absolute;left:86px;top:306px;width:484px;height:21px;background:#c6ced6;"></div>
<div style="position:absolute;left:86px;top:327px;width:484px;height:1px;background:#8a9db0;"></div>
<div style="position:absolute;left:330px;top:306px;width:1px;height:22px;background:#8a9cae;"></div>
<div style="position:absolute;left:370px;top:306px;width:1px;height:22px;background:#8a9cae;"></div>
<div style="position:absolute;left:404px;top:306px;width:1px;height:22px;background:#8a9cae;"></div>
<div style="position:absolute;left:431px;top:306px;width:1px;height:22px;background:#8a9cae;"></div>
<div style="position:absolute;left:459px;top:306px;width:1px;height:22px;background:#8a9cae;"></div>
<div style="position:absolute;left:487px;top:306px;width:1px;height:22px;background:#8a9cae;"></div>
<div style="position:absolute;left:514px;top:306px;width:1px;height:22px;background:#8a9cae;"></div>
<div style="position:absolute;left:542px;top:306px;width:1px;height:22px;background:#8a9cae;"></div>
<div style="position:absolute;left:93px;top:310px;font-size:13px;line-height:15px;height:15px;color:#1a1a1a;font-weight:400;white-space:nowrap;letter-spacing:-0.25px;width:236px;text-align:left;overflow:hidden;">Aladdin</div>
<div style="position:absolute;left:333px;top:310px;font-size:13px;line-height:15px;height:15px;color:#1a1a1a;font-weight:400;white-space:nowrap;letter-spacing:-0.25px;width:39px;text-align:center;overflow:hidden;">1992</div>
<div style="position:absolute;left:371px;top:310px;font-size:13px;line-height:15px;height:15px;color:#1a1a1a;font-weight:400;white-space:nowrap;letter-spacing:-0.25px;width:33px;text-align:center;overflow:hidden;padding-left:9px;box-sizing:border-box;">8.0</div>
<svg style="position:absolute;left:409.5px;top:308.3px;" width="18" height="18" viewBox="0 0 18 18"><circle cx="9" cy="9" r="6.7" fill="none" stroke="#1cbd0a" stroke-width="1.4"/><path d="M5.4 9H12.6M9 5.4V12.6" stroke="#1cbd0a" stroke-width="1.4" fill="none"/></svg>
<svg style="position:absolute;left:439px;top:306px" width="16" height="22" viewBox="0 0 16 22"><path d="M1.7 12.7 L5 15.8 L13.2 7.8" fill="none" stroke="#1cbd0a" stroke-width="1.75" stroke-linecap="round" stroke-linejoin="miter"/></svg>
<svg style="position:absolute;left:467px;top:306px" width="16" height="22" viewBox="0 0 16 22"><path d="M1.7 12.7 L5 15.8 L13.2 7.8" fill="none" stroke="#1cbd0a" stroke-width="1.75" stroke-linecap="round" stroke-linejoin="miter"/></svg>
<svg style="position:absolute;left:494px;top:306px" width="16" height="22" viewBox="0 0 16 22"><path d="M1.7 12.7 L5 15.8 L13.2 7.8" fill="none" stroke="#1cbd0a" stroke-width="1.75" stroke-linecap="round" stroke-linejoin="miter"/></svg>
<svg style="position:absolute;left:522px;top:306px" width="16" height="22" viewBox="0 0 16 22"><path d="M1.7 12.7 L5 15.8 L13.2 7.8" fill="none" stroke="#1cbd0a" stroke-width="1.75" stroke-linecap="round" stroke-linejoin="miter"/></svg>
<svg style="position:absolute;left:549px;top:306px" width="16" height="22" viewBox="0 0 16 22"><path d="M1.7 12.7 L5 15.8 L13.2 7.8" fill="none" stroke="#1cbd0a" stroke-width="1.75" stroke-linecap="round" stroke-linejoin="miter"/></svg>
<div style="position:absolute;left:91px;top:349px;width:479px;height:1px;background:#c2c2c2;"></div>
<div style="position:absolute;left:330px;top:329px;width:1px;height:21px;background:#c8c8c8;"></div>
<div style="position:absolute;left:370px;top:329px;width:1px;height:21px;background:#c8c8c8;"></div>
<div style="position:absolute;left:404px;top:329px;width:1px;height:21px;background:#c8c8c8;"></div>
<div style="position:absolute;left:431px;top:329px;width:1px;height:21px;background:#c8c8c8;"></div>
<div style="position:absolute;left:459px;top:329px;width:1px;height:21px;background:#c8c8c8;"></div>
<div style="position:absolute;left:487px;top:329px;width:1px;height:21px;background:#c8c8c8;"></div>
<div style="position:absolute;left:514px;top:329px;width:1px;height:21px;background:#c8c8c8;"></div>
<div style="position:absolute;left:542px;top:329px;width:1px;height:21px;background:#c8c8c8;"></div>
<div style="position:absolute;left:93px;top:332px;font-size:13px;line-height:15px;height:15px;color:#666666;font-weight:400;white-space:nowrap;letter-spacing:-0.25px;width:236px;text-align:left;overflow:hidden;">Aladdin and the King of Thieves</div>
<div style="position:absolute;left:333px;top:332px;font-size:13px;line-height:15px;height:15px;color:#666666;font-weight:400;white-space:nowrap;letter-spacing:-0.25px;width:39px;text-align:center;overflow:hidden;">1996</div>
<div style="position:absolute;left:371px;top:332px;font-size:13px;line-height:15px;height:15px;color:#666666;font-weight:400;white-space:nowrap;letter-spacing:-0.25px;width:33px;text-align:center;overflow:hidden;padding-left:9px;box-sizing:border-box;">6.1</div>
<svg style="position:absolute;left:439px;top:328px" width="16" height="22" viewBox="0 0 16 22"><path d="M1.7 12.7 L5 15.8 L13.2 7.8" fill="none" stroke="#1cbd0a" stroke-width="1.75" stroke-linecap="round" stroke-linejoin="miter"/></svg>
<svg style="position:absolute;left:467px;top:328px" width="16" height="22" viewBox="0 0 16 22"><path d="M1.7 12.7 L5 15.8 L13.2 7.8" fill="none" stroke="#1cbd0a" stroke-width="1.75" stroke-linecap="round" stroke-linejoin="miter"/></svg>
<svg style="position:absolute;left:494px;top:328px" width="16" height="22" viewBox="0 0 16 22"><path d="M1.7 12.7 L5 15.8 L13.2 7.8" fill="none" stroke="#1cbd0a" stroke-width="1.75" stroke-linecap="round" stroke-linejoin="miter"/></svg>
<svg style="position:absolute;left:522px;top:328px" width="16" height="22" viewBox="0 0 16 22"><path d="M3.75 7.65 L11.65 15.55 M11.65 7.65 L3.75 15.55" fill="none" stroke="#d40f0f" stroke-width="1.4" stroke-linecap="round"/></svg>
<svg style="position:absolute;left:549px;top:328px" width="16" height="22" viewBox="0 0 16 22"><path d="M3.75 7.65 L11.65 15.55 M11.65 7.65 L3.75 15.55" fill="none" stroke="#d40f0f" stroke-width="1.4" stroke-linecap="round"/></svg>
<div style="position:absolute;left:91px;top:371px;width:479px;height:1px;background:#c2c2c2;"></div>
<div style="position:absolute;left:330px;top:351px;width:1px;height:21px;background:#c8c8c8;"></div>
<div style="position:absolute;left:370px;top:351px;width:1px;height:21px;background:#c8c8c8;"></div>
<div style="position:absolute;left:404px;top:351px;width:1px;height:21px;background:#c8c8c8;"></div>
<div style="position:absolute;left:431px;top:351px;width:1px;height:21px;background:#c8c8c8;"></div>
<div style="position:absolute;left:459px;top:351px;width:1px;height:21px;background:#c8c8c8;"></div>
<div style="position:absolute;left:487px;top:351px;width:1px;height:21px;background:#c8c8c8;"></div>
<div style="position:absolute;left:514px;top:351px;width:1px;height:21px;background:#c8c8c8;"></div>
<div style="position:absolute;left:542px;top:351px;width:1px;height:21px;background:#c8c8c8;"></div>
<div style="position:absolute;left:93px;top:354px;font-size:13px;line-height:15px;height:15px;color:#666666;font-weight:400;white-space:nowrap;letter-spacing:-0.25px;width:236px;text-align:left;overflow:hidden;">Alice in Wonderland</div>
<div style="position:absolute;left:333px;top:354px;font-size:13px;line-height:15px;height:15px;color:#666666;font-weight:400;white-space:nowrap;letter-spacing:-0.25px;width:39px;text-align:center;overflow:hidden;">1951</div>
<div style="position:absolute;left:371px;top:354px;font-size:13px;line-height:15px;height:15px;color:#666666;font-weight:400;white-space:nowrap;letter-spacing:-0.25px;width:33px;text-align:center;overflow:hidden;padding-left:9px;box-sizing:border-box;">7.1</div>
<svg style="position:absolute;left:439px;top:350px" width="16" height="22" viewBox="0 0 16 22"><path d="M1.7 12.7 L5 15.8 L13.2 7.8" fill="none" stroke="#1cbd0a" stroke-width="1.75" stroke-linecap="round" stroke-linejoin="miter"/></svg>
<svg style="position:absolute;left:467px;top:350px" width="16" height="22" viewBox="0 0 16 22"><path d="M1.7 12.7 L5 15.8 L13.2 7.8" fill="none" stroke="#1cbd0a" stroke-width="1.75" stroke-linecap="round" stroke-linejoin="miter"/></svg>
<svg style="position:absolute;left:494px;top:350px" width="16" height="22" viewBox="0 0 16 22"><path d="M1.7 12.7 L5 15.8 L13.2 7.8" fill="none" stroke="#1cbd0a" stroke-width="1.75" stroke-linecap="round" stroke-linejoin="miter"/></svg>
<svg style="position:absolute;left:522px;top:350px" width="16" height="22" viewBox="0 0 16 22"><path d="M3.75 7.65 L11.65 15.55 M11.65 7.65 L3.75 15.55" fill="none" stroke="#d40f0f" stroke-width="1.4" stroke-linecap="round"/></svg>
<svg style="position:absolute;left:549px;top:350px" width="16" height="22" viewBox="0 0 16 22"><path d="M3.75 7.65 L11.65 15.55 M11.65 7.65 L3.75 15.55" fill="none" stroke="#d40f0f" stroke-width="1.4" stroke-linecap="round"/></svg>
<div style="position:absolute;left:91px;top:393px;width:479px;height:1px;background:#c2c2c2;"></div>
<div style="position:absolute;left:330px;top:373px;width:1px;height:21px;background:#c8c8c8;"></div>
<div style="position:absolute;left:370px;top:373px;width:1px;height:21px;background:#c8c8c8;"></div>
<div style="position:absolute;left:404px;top:373px;width:1px;height:21px;background:#c8c8c8;"></div>
<div style="position:absolute;left:431px;top:373px;width:1px;height:21px;background:#c8c8c8;"></div>
<div style="position:absolute;left:459px;top:373px;width:1px;height:21px;background:#c8c8c8;"></div>
<div style="position:absolute;left:487px;top:373px;width:1px;height:21px;background:#c8c8c8;"></div>
<div style="position:absolute;left:514px;top:373px;width:1px;height:21px;background:#c8c8c8;"></div>
<div style="position:absolute;left:542px;top:373px;width:1px;height:21px;background:#c8c8c8;"></div>
<div style="position:absolute;left:93px;top:376px;font-size:13px;line-height:15px;height:15px;color:#666666;font-weight:400;white-space:nowrap;letter-spacing:-0.25px;width:236px;text-align:left;overflow:hidden;">Alice in Wonderland</div>
<div style="position:absolute;left:333px;top:376px;font-size:13px;line-height:15px;height:15px;color:#666666;font-weight:400;white-space:nowrap;letter-spacing:-0.25px;width:39px;text-align:center;overflow:hidden;">2010</div>
<div style="position:absolute;left:371px;top:376px;font-size:13px;line-height:15px;height:15px;color:#666666;font-weight:400;white-space:nowrap;letter-spacing:-0.25px;width:33px;text-align:center;overflow:hidden;padding-left:9px;box-sizing:border-box;">6.6</div>
<svg style="position:absolute;left:439px;top:372px" width="16" height="22" viewBox="0 0 16 22"><path d="M1.7 12.7 L5 15.8 L13.2 7.8" fill="none" stroke="#1cbd0a" stroke-width="1.75" stroke-linecap="round" stroke-linejoin="miter"/></svg>
<svg style="position:absolute;left:467px;top:372px" width="16" height="22" viewBox="0 0 16 22"><path d="M1.7 12.7 L5 15.8 L13.2 7.8" fill="none" stroke="#1cbd0a" stroke-width="1.75" stroke-linecap="round" stroke-linejoin="miter"/></svg>
<svg style="position:absolute;left:494px;top:372px" width="16" height="22" viewBox="0 0 16 22"><path d="M1.7 12.7 L5 15.8 L13.2 7.8" fill="none" stroke="#1cbd0a" stroke-width="1.75" stroke-linecap="round" stroke-linejoin="miter"/></svg>
<svg style="position:absolute;left:522px;top:372px" width="16" height="22" viewBox="0 0 16 22"><path d="M1.7 12.7 L5 15.8 L13.2 7.8" fill="none" stroke="#1cbd0a" stroke-width="1.75" stroke-linecap="round" stroke-linejoin="miter"/></svg>
<svg style="position:absolute;left:549px;top:372px" width="16" height="22" viewBox="0 0 16 22"><path d="M3.75 7.65 L11.65 15.55 M11.65 7.65 L3.75 15.55" fill="none" stroke="#d40f0f" stroke-width="1.4" stroke-linecap="round"/></svg>
<div style="position:absolute;left:91px;top:415px;width:479px;height:1px;background:#c2c2c2;"></div>
<div style="position:absolute;left:330px;top:395px;width:1px;height:21px;background:#c8c8c8;"></div>
<div style="position:absolute;left:370px;top:395px;width:1px;height:21px;background:#c8c8c8;"></div>
<div style="position:absolute;left:404px;top:395px;width:1px;height:21px;background:#c8c8c8;"></div>
<div style="position:absolute;left:431px;top:395px;width:1px;height:21px;background:#c8c8c8;"></div>
<div style="position:absolute;left:459px;top:395px;width:1px;height:21px;background:#c8c8c8;"></div>
<div style="position:absolute;left:487px;top:395px;width:1px;height:21px;background:#c8c8c8;"></div>
<div style="position:absolute;left:514px;top:395px;width:1px;height:21px;background:#c8c8c8;"></div>
<div style="position:absolute;left:542px;top:395px;width:1px;height:21px;background:#c8c8c8;"></div>
<div style="position:absolute;left:93px;top:398px;font-size:13px;line-height:15px;height:15px;color:#666666;font-weight:400;white-space:nowrap;letter-spacing:-0.25px;width:236px;text-align:left;overflow:hidden;">Alien</div>
<div style="position:absolute;left:333px;top:398px;font-size:13px;line-height:15px;height:15px;color:#666666;font-weight:400;white-space:nowrap;letter-spacing:-0.25px;width:39px;text-align:center;overflow:hidden;">1979</div>
<div style="position:absolute;left:371px;top:398px;font-size:13px;line-height:15px;height:15px;color:#666666;font-weight:400;white-space:nowrap;letter-spacing:-0.25px;width:33px;text-align:center;overflow:hidden;padding-left:9px;box-sizing:border-box;">8.0</div>
<svg style="position:absolute;left:439px;top:394px" width="16" height="22" viewBox="0 0 16 22"><path d="M1.7 12.7 L5 15.8 L13.2 7.8" fill="none" stroke="#1cbd0a" stroke-width="1.75" stroke-linecap="round" stroke-linejoin="miter"/></svg>
<svg style="position:absolute;left:467px;top:394px" width="16" height="22" viewBox="0 0 16 22"><path d="M1.7 12.7 L5 15.8 L13.2 7.8" fill="none" stroke="#1cbd0a" stroke-width="1.75" stroke-linecap="round" stroke-linejoin="miter"/></svg>
<svg style="position:absolute;left:494px;top:394px" width="16" height="22" viewBox="0 0 16 22"><path d="M1.7 12.7 L5 15.8 L13.2 7.8" fill="none" stroke="#1cbd0a" stroke-width="1.75" stroke-linecap="round" stroke-linejoin="miter"/></svg>
<svg style="position:absolute;left:522px;top:394px" width="16" height="22" viewBox="0 0 16 22"><path d="M3.75 7.65 L11.65 15.55 M11.65 7.65 L3.75 15.55" fill="none" stroke="#d40f0f" stroke-width="1.4" stroke-linecap="round"/></svg>
<svg style="position:absolute;left:549px;top:394px" width="16" height="22" viewBox="0 0 16 22"><path d="M3.75 7.65 L11.65 15.55 M11.65 7.65 L3.75 15.55" fill="none" stroke="#d40f0f" stroke-width="1.4" stroke-linecap="round"/></svg>
<div style="position:absolute;left:91px;top:437px;width:479px;height:1px;background:#c2c2c2;"></div>
<div style="position:absolute;left:330px;top:417px;width:1px;height:21px;background:#c8c8c8;"></div>
<div style="position:absolute;left:370px;top:417px;width:1px;height:21px;background:#c8c8c8;"></div>
<div style="position:absolute;left:404px;top:417px;width:1px;height:21px;background:#c8c8c8;"></div>
<div style="position:absolute;left:431px;top:417px;width:1px;height:21px;background:#c8c8c8;"></div>
<div style="position:absolute;left:459px;top:417px;width:1px;height:21px;background:#c8c8c8;"></div>
<div style="position:absolute;left:487px;top:417px;width:1px;height:21px;background:#c8c8c8;"></div>
<div style="position:absolute;left:514px;top:417px;width:1px;height:21px;background:#c8c8c8;"></div>
<div style="position:absolute;left:542px;top:417px;width:1px;height:21px;background:#c8c8c8;"></div>
<div style="position:absolute;left:93px;top:420px;font-size:13px;line-height:15px;height:15px;color:#666666;font-weight:400;white-space:nowrap;letter-spacing:-0.25px;width:236px;text-align:left;overflow:hidden;">Along Came Polly</div>
<div style="position:absolute;left:333px;top:420px;font-size:13px;line-height:15px;height:15px;color:#666666;font-weight:400;white-space:nowrap;letter-spacing:-0.25px;width:39px;text-align:center;overflow:hidden;">2004</div>
<div style="position:absolute;left:371px;top:420px;font-size:13px;line-height:15px;height:15px;color:#666666;font-weight:400;white-space:nowrap;letter-spacing:-0.25px;width:33px;text-align:center;overflow:hidden;padding-left:9px;box-sizing:border-box;">5.8</div>
<svg style="position:absolute;left:439px;top:416px" width="16" height="22" viewBox="0 0 16 22"><path d="M1.7 12.7 L5 15.8 L13.2 7.8" fill="none" stroke="#1cbd0a" stroke-width="1.75" stroke-linecap="round" stroke-linejoin="miter"/></svg>
<svg style="position:absolute;left:467px;top:416px" width="16" height="22" viewBox="0 0 16 22"><path d="M1.7 12.7 L5 15.8 L13.2 7.8" fill="none" stroke="#1cbd0a" stroke-width="1.75" stroke-linecap="round" stroke-linejoin="miter"/></svg>
<svg style="position:absolute;left:494px;top:416px" width="16" height="22" viewBox="0 0 16 22"><path d="M1.7 12.7 L5 15.8 L13.2 7.8" fill="none" stroke="#1cbd0a" stroke-width="1.75" stroke-linecap="round" stroke-linejoin="miter"/></svg>
<svg style="position:absolute;left:522px;top:416px" width="16" height="22" viewBox="0 0 16 22"><path d="M1.7 12.7 L5 15.8 L13.2 7.8" fill="none" stroke="#1cbd0a" stroke-width="1.75" stroke-linecap="round" stroke-linejoin="miter"/></svg>
<svg style="position:absolute;left:549px;top:416px" width="16" height="22" viewBox="0 0 16 22"><path d="M1.7 12.7 L5 15.8 L13.2 7.8" fill="none" stroke="#1cbd0a" stroke-width="1.75" stroke-linecap="round" stroke-linejoin="miter"/></svg>
<div style="position:absolute;left:91px;top:459px;width:479px;height:1px;background:#c2c2c2;"></div>
<div style="position:absolute;left:330px;top:439px;width:1px;height:21px;background:#c8c8c8;"></div>
<div style="position:absolute;left:370px;top:439px;width:1px;height:21px;background:#c8c8c8;"></div>
<div style="position:absolute;left:404px;top:439px;width:1px;height:21px;background:#c8c8c8;"></div>
<div style="position:absolute;left:431px;top:439px;width:1px;height:21px;background:#c8c8c8;"></div>
<div style="position:absolute;left:459px;top:439px;width:1px;height:21px;background:#c8c8c8;"></div>
<div style="position:absolute;left:487px;top:439px;width:1px;height:21px;background:#c8c8c8;"></div>
<div style="position:absolute;left:514px;top:439px;width:1px;height:21px;background:#c8c8c8;"></div>
<div style="position:absolute;left:542px;top:439px;width:1px;height:21px;background:#c8c8c8;"></div>
<div style="position:absolute;left:93px;top:442px;font-size:13px;line-height:15px;height:15px;color:#666666;font-weight:400;white-space:nowrap;letter-spacing:-0.25px;width:236px;text-align:left;overflow:hidden;">Alvin and the Chipmunks</div>
<div style="position:absolute;left:333px;top:442px;font-size:13px;line-height:15px;height:15px;color:#666666;font-weight:400;white-space:nowrap;letter-spacing:-0.25px;width:39px;text-align:center;overflow:hidden;">2007</div>
<div style="position:absolute;left:371px;top:442px;font-size:13px;line-height:15px;height:15px;color:#666666;font-weight:400;white-space:nowrap;letter-spacing:-0.25px;width:33px;text-align:center;overflow:hidden;padding-left:9px;box-sizing:border-box;">5.6</div>
<svg style="position:absolute;left:439px;top:438px" width="16" height="22" viewBox="0 0 16 22"><path d="M1.7 12.7 L5 15.8 L13.2 7.8" fill="none" stroke="#1cbd0a" stroke-width="1.75" stroke-linecap="round" stroke-linejoin="miter"/></svg>
<svg style="position:absolute;left:467px;top:438px" width="16" height="22" viewBox="0 0 16 22"><path d="M1.7 12.7 L5 15.8 L13.2 7.8" fill="none" stroke="#1cbd0a" stroke-width="1.75" stroke-linecap="round" stroke-linejoin="miter"/></svg>
<svg style="position:absolute;left:494px;top:438px" width="16" height="22" viewBox="0 0 16 22"><path d="M1.7 12.7 L5 15.8 L13.2 7.8" fill="none" stroke="#1cbd0a" stroke-width="1.75" stroke-linecap="round" stroke-linejoin="miter"/></svg>
<svg style="position:absolute;left:522px;top:438px" width="16" height="22" viewBox="0 0 16 22"><path d="M3.75 7.65 L11.65 15.55 M11.65 7.65 L3.75 15.55" fill="none" stroke="#d40f0f" stroke-width="1.4" stroke-linecap="round"/></svg>
<svg style="position:absolute;left:549px;top:438px" width="16" height="22" viewBox="0 0 16 22"><path d="M1.7 12.7 L5 15.8 L13.2 7.8" fill="none" stroke="#1cbd0a" stroke-width="1.75" stroke-linecap="round" stroke-linejoin="miter"/></svg>
<div style="position:absolute;left:91px;top:481px;width:479px;height:1px;background:#c2c2c2;"></div>
<div style="position:absolute;left:330px;top:461px;width:1px;height:21px;background:#c8c8c8;"></div>
<div style="position:absolute;left:370px;top:461px;width:1px;height:21px;background:#c8c8c8;"></div>
<div style="position:absolute;left:404px;top:461px;width:1px;height:21px;background:#c8c8c8;"></div>
<div style="position:absolute;left:431px;top:461px;width:1px;height:21px;background:#c8c8c8;"></div>
<div style="position:absolute;left:459px;top:461px;width:1px;height:21px;background:#c8c8c8;"></div>
<div style="position:absolute;left:487px;top:461px;width:1px;height:21px;background:#c8c8c8;"></div>
<div style="position:absolute;left:514px;top:461px;width:1px;height:21px;background:#c8c8c8;"></div>
<div style="position:absolute;left:542px;top:461px;width:1px;height:21px;background:#c8c8c8;"></div>
<div style="position:absolute;left:93px;top:464px;font-size:13px;line-height:15px;height:15px;color:#666666;font-weight:400;white-space:nowrap;letter-spacing:-0.25px;width:236px;text-align:left;overflow:hidden;">Amazing Spider-Man, The</div>
<div style="position:absolute;left:333px;top:464px;font-size:13px;line-height:15px;height:15px;color:#666666;font-weight:400;white-space:nowrap;letter-spacing:-0.25px;width:39px;text-align:center;overflow:hidden;">2012</div>
<svg style="position:absolute;left:439px;top:460px" width="16" height="22" viewBox="0 0 16 22"><path d="M1.7 12.7 L5 15.8 L13.2 7.8" fill="none" stroke="#1cbd0a" stroke-width="1.75" stroke-linecap="round" stroke-linejoin="miter"/></svg>
<svg style="position:absolute;left:467px;top:460px" width="16" height="22" viewBox="0 0 16 22"><path d="M1.7 12.7 L5 15.8 L13.2 7.8" fill="none" stroke="#1cbd0a" stroke-width="1.75" stroke-linecap="round" stroke-linejoin="miter"/></svg>
<svg style="position:absolute;left:494px;top:460px" width="16" height="22" viewBox="0 0 16 22"><path d="M3.75 7.65 L11.65 15.55 M11.65 7.65 L3.75 15.55" fill="none" stroke="#d40f0f" stroke-width="1.4" stroke-linecap="round"/></svg>
<svg style="position:absolute;left:522px;top:460px" width="16" height="22" viewBox="0 0 16 22"><path d="M3.75 7.65 L11.65 15.55 M11.65 7.65 L3.75 15.55" fill="none" stroke="#d40f0f" stroke-width="1.4" stroke-linecap="round"/></svg>
<svg style="position:absolute;left:549px;top:460px" width="16" height="22" viewBox="0 0 16 22"><path d="M3.75 7.65 L11.65 15.55 M11.65 7.65 L3.75 15.55" fill="none" stroke="#d40f0f" stroke-width="1.4" stroke-linecap="round"/></svg>
<div style="position:absolute;left:91px;top:503px;width:479px;height:1px;background:#c2c2c2;"></div>
<div style="position:absolute;left:330px;top:483px;width:1px;height:21px;background:#c8c8c8;"></div>
<div style="position:absolute;left:370px;top:483px;width:1px;height:21px;background:#c8c8c8;"></div>
<div style="position:absolute;left:404px;top:483px;width:1px;height:21px;background:#c8c8c8;"></div>
<div style="position:absolute;left:431px;top:483px;width:1px;height:21px;background:#c8c8c8;"></div>
<div style="position:absolute;left:459px;top:483px;width:1px;height:21px;background:#c8c8c8;"></div>
<div style="position:absolute;left:487px;top:483px;width:1px;height:21px;background:#c8c8c8;"></div>
<div style="position:absolute;left:514px;top:483px;width:1px;height:21px;background:#c8c8c8;"></div>
<div style="position:absolute;left:542px;top:483px;width:1px;height:21px;background:#c8c8c8;"></div>
<div style="position:absolute;left:93px;top:486px;font-size:13px;line-height:15px;height:15px;color:#666666;font-weight:400;white-space:nowrap;letter-spacing:-0.25px;width:236px;text-align:left;overflow:hidden;">American History X</div>
<div style="position:absolute;left:333px;top:486px;font-size:13px;line-height:15px;height:15px;color:#666666;font-weight:400;white-space:nowrap;letter-spacing:-0.25px;width:39px;text-align:center;overflow:hidden;">1998</div>
<div style="position:absolute;left:371px;top:486px;font-size:13px;line-height:15px;height:15px;color:#666666;font-weight:400;white-space:nowrap;letter-spacing:-0.25px;width:33px;text-align:center;overflow:hidden;padding-left:9px;box-sizing:border-box;">8.3</div>
<svg style="position:absolute;left:439px;top:482px" width="16" height="22" viewBox="0 0 16 22"><path d="M1.7 12.7 L5 15.8 L13.2 7.8" fill="none" stroke="#1cbd0a" stroke-width="1.75" stroke-linecap="round" stroke-linejoin="miter"/></svg>
<svg style="position:absolute;left:467px;top:482px" width="16" height="22" viewBox="0 0 16 22"><path d="M1.7 12.7 L5 15.8 L13.2 7.8" fill="none" stroke="#1cbd0a" stroke-width="1.75" stroke-linecap="round" stroke-linejoin="miter"/></svg>
<svg style="position:absolute;left:494px;top:482px" width="16" height="22" viewBox="0 0 16 22"><path d="M1.7 12.7 L5 15.8 L13.2 7.8" fill="none" stroke="#1cbd0a" stroke-width="1.75" stroke-linecap="round" stroke-linejoin="miter"/></svg>
<svg style="position:absolute;left:522px;top:482px" width="16" height="22" viewBox="0 0 16 22"><path d="M3.75 7.65 L11.65 15.55 M11.65 7.65 L3.75 15.55" fill="none" stroke="#d40f0f" stroke-width="1.4" stroke-linecap="round"/></svg>
<svg style="position:absolute;left:549px;top:482px" width="16" height="22" viewBox="0 0 16 22"><path d="M3.75 7.65 L11.65 15.55 M11.65 7.65 L3.75 15.55" fill="none" stroke="#d40f0f" stroke-width="1.4" stroke-linecap="round"/></svg>
<div style="position:absolute;left:91px;top:525px;width:479px;height:1px;background:#c2c2c2;"></div>
<div style="position:absolute;left:330px;top:505px;width:1px;height:21px;background:#c8c8c8;"></div>
<div style="position:absolute;left:370px;top:505px;width:1px;height:21px;background:#c8c8c8;"></div>
<div style="position:absolute;left:404px;top:505px;width:1px;height:21px;background:#c8c8c8;"></div>
<div style="position:absolute;left:431px;top:505px;width:1px;height:21px;background:#c8c8c8;"></div>
<div style="position:absolute;left:459px;top:505px;width:1px;height:21px;background:#c8c8c8;"></div>
<div style="position:absolute;left:487px;top:505px;width:1px;height:21px;background:#c8c8c8;"></div>
<div style="position:absolute;left:514px;top:505px;width:1px;height:21px;background:#c8c8c8;"></div>
<div style="position:absolute;left:542px;top:505px;width:1px;height:21px;background:#c8c8c8;"></div>
<div style="position:absolute;left:93px;top:508px;font-size:13px;line-height:15px;height:15px;color:#666666;font-weight:400;white-space:nowrap;letter-spacing:-0.25px;width:236px;text-align:left;overflow:hidden;">American Tail: Fievel Goes West, An</div>
<div style="position:absolute;left:333px;top:508px;font-size:13px;line-height:15px;height:15px;color:#666666;font-weight:400;white-space:nowrap;letter-spacing:-0.25px;width:39px;text-align:center;overflow:hidden;">1991</div>
<div style="position:absolute;left:371px;top:508px;font-size:13px;line-height:15px;height:15px;color:#666666;font-weight:400;white-space:nowrap;letter-spacing:-0.25px;width:33px;text-align:center;overflow:hidden;padding-left:9px;box-sizing:border-box;">6.5</div>
<svg style="position:absolute;left:439px;top:504px" width="16" height="22" viewBox="0 0 16 22"><path d="M1.7 12.7 L5 15.8 L13.2 7.8" fill="none" stroke="#1cbd0a" stroke-width="1.75" stroke-linecap="round" stroke-linejoin="miter"/></svg>
<svg style="position:absolute;left:467px;top:504px" width="16" height="22" viewBox="0 0 16 22"><path d="M1.7 12.7 L5 15.8 L13.2 7.8" fill="none" stroke="#1cbd0a" stroke-width="1.75" stroke-linecap="round" stroke-linejoin="miter"/></svg>
<svg style="position:absolute;left:494px;top:504px" width="16" height="22" viewBox="0 0 16 22"><path d="M1.7 12.7 L5 15.8 L13.2 7.8" fill="none" stroke="#1cbd0a" stroke-width="1.75" stroke-linecap="round" stroke-linejoin="miter"/></svg>
<svg style="position:absolute;left:522px;top:504px" width="16" height="22" viewBox="0 0 16 22"><path d="M3.75 7.65 L11.65 15.55 M11.65 7.65 L3.75 15.55" fill="none" stroke="#d40f0f" stroke-width="1.4" stroke-linecap="round"/></svg>
<svg style="position:absolute;left:549px;top:504px" width="16" height="22" viewBox="0 0 16 22"><path d="M3.75 7.65 L11.65 15.55 M11.65 7.65 L3.75 15.55" fill="none" stroke="#d40f0f" stroke-width="1.4" stroke-linecap="round"/></svg>
<div style="position:absolute;left:91px;top:547px;width:479px;height:1px;background:#c2c2c2;"></div>
<div style="position:absolute;left:330px;top:527px;width:1px;height:21px;background:#c8c8c8;"></div>
<div style="position:absolute;left:370px;top:527px;width:1px;height:21px;background:#c8c8c8;"></div>
<div style="position:absolute;left:404px;top:527px;width:1px;height:21px;background:#c8c8c8;"></div>
<div style="position:absolute;left:431px;top:527px;width:1px;height:21px;background:#c8c8c8;"></div>
<div style="position:absolute;left:459px;top:527px;width:1px;height:21px;background:#c8c8c8;"></div>
<div style="position:absolute;left:487px;top:527px;width:1px;height:21px;background:#c8c8c8;"></div>
<div style="position:absolute;left:514px;top:527px;width:1px;height:21px;background:#c8c8c8;"></div>
<div style="position:absolute;left:542px;top:527px;width:1px;height:21px;background:#c8c8c8;"></div>
<div style="position:absolute;left:93px;top:530px;font-size:13px;line-height:15px;height:15px;color:#666666;font-weight:400;white-space:nowrap;letter-spacing:-0.25px;width:236px;text-align:left;overflow:hidden;">Ant-Man and the Wasp</div>
<div style="position:absolute;left:333px;top:530px;font-size:13px;line-height:15px;height:15px;color:#666666;font-weight:400;white-space:nowrap;letter-spacing:-0.25px;width:39px;text-align:center;overflow:hidden;">2018</div>
<svg style="position:absolute;left:439px;top:526px" width="16" height="22" viewBox="0 0 16 22"><path d="M1.7 12.7 L5 15.8 L13.2 7.8" fill="none" stroke="#1cbd0a" stroke-width="1.75" stroke-linecap="round" stroke-linejoin="miter"/></svg>
<svg style="position:absolute;left:467px;top:526px" width="16" height="22" viewBox="0 0 16 22"><path d="M1.7 12.7 L5 15.8 L13.2 7.8" fill="none" stroke="#1cbd0a" stroke-width="1.75" stroke-linecap="round" stroke-linejoin="miter"/></svg>
<svg style="position:absolute;left:494px;top:526px" width="16" height="22" viewBox="0 0 16 22"><path d="M3.75 7.65 L11.65 15.55 M11.65 7.65 L3.75 15.55" fill="none" stroke="#d40f0f" stroke-width="1.4" stroke-linecap="round"/></svg>
<svg style="position:absolute;left:522px;top:526px" width="16" height="22" viewBox="0 0 16 22"><path d="M3.75 7.65 L11.65 15.55 M11.65 7.65 L3.75 15.55" fill="none" stroke="#d40f0f" stroke-width="1.4" stroke-linecap="round"/></svg>
<svg style="position:absolute;left:549px;top:526px" width="16" height="22" viewBox="0 0 16 22"><path d="M3.75 7.65 L11.65 15.55 M11.65 7.65 L3.75 15.55" fill="none" stroke="#d40f0f" stroke-width="1.4" stroke-linecap="round"/></svg>
<div style="position:absolute;left:91px;top:569px;width:479px;height:1px;background:#c2c2c2;"></div>
<div style="position:absolute;left:330px;top:549px;width:1px;height:21px;background:#c8c8c8;"></div>
<div style="position:absolute;left:370px;top:549px;width:1px;height:21px;background:#c8c8c8;"></div>
<div style="position:absolute;left:404px;top:549px;width:1px;height:21px;background:#c8c8c8;"></div>
<div style="position:absolute;left:431px;top:549px;width:1px;height:21px;background:#c8c8c8;"></div>
<div style="position:absolute;left:459px;top:549px;width:1px;height:21px;background:#c8c8c8;"></div>
<div style="position:absolute;left:487px;top:549px;width:1px;height:21px;background:#c8c8c8;"></div>
<div style="position:absolute;left:514px;top:549px;width:1px;height:21px;background:#c8c8c8;"></div>
<div style="position:absolute;left:542px;top:549px;width:1px;height:21px;background:#c8c8c8;"></div>
<div style="position:absolute;left:93px;top:552px;font-size:13px;line-height:15px;height:15px;color:#666666;font-weight:400;white-space:nowrap;letter-spacing:-0.25px;width:236px;text-align:left;overflow:hidden;">Antz - Ameisen</div>
<div style="position:absolute;left:333px;top:552px;font-size:13px;line-height:15px;height:15px;color:#666666;font-weight:400;white-space:nowrap;letter-spacing:-0.25px;width:39px;text-align:center;overflow:hidden;">1998</div>
<svg style="position:absolute;left:439px;top:548px" width="16" height="22" viewBox="0 0 16 22"><path d="M1.7 12.7 L5 15.8 L13.2 7.8" fill="none" stroke="#1cbd0a" stroke-width="1.75" stroke-linecap="round" stroke-linejoin="miter"/></svg>
<svg style="position:absolute;left:467px;top:548px" width="16" height="22" viewBox="0 0 16 22"><path d="M1.7 12.7 L5 15.8 L13.2 7.8" fill="none" stroke="#1cbd0a" stroke-width="1.75" stroke-linecap="round" stroke-linejoin="miter"/></svg>
<svg style="position:absolute;left:494px;top:548px" width="16" height="22" viewBox="0 0 16 22"><path d="M3.75 7.65 L11.65 15.55 M11.65 7.65 L3.75 15.55" fill="none" stroke="#d40f0f" stroke-width="1.4" stroke-linecap="round"/></svg>
<svg style="position:absolute;left:522px;top:548px" width="16" height="22" viewBox="0 0 16 22"><path d="M3.75 7.65 L11.65 15.55 M11.65 7.65 L3.75 15.55" fill="none" stroke="#d40f0f" stroke-width="1.4" stroke-linecap="round"/></svg>
<svg style="position:absolute;left:549px;top:548px" width="16" height="22" viewBox="0 0 16 22"><path d="M3.75 7.65 L11.65 15.55 M11.65 7.65 L3.75 15.55" fill="none" stroke="#d40f0f" stroke-width="1.4" stroke-linecap="round"/></svg>
<div style="position:absolute;left:91px;top:591px;width:479px;height:1px;background:#c2c2c2;"></div>
<div style="position:absolute;left:330px;top:571px;width:1px;height:21px;background:#c8c8c8;"></div>
<div style="position:absolute;left:370px;top:571px;width:1px;height:21px;background:#c8c8c8;"></div>
<div style="position:absolute;left:404px;top:571px;width:1px;height:21px;background:#c8c8c8;"></div>
<div style="position:absolute;left:431px;top:571px;width:1px;height:21px;background:#c8c8c8;"></div>
<div style="position:absolute;left:459px;top:571px;width:1px;height:21px;background:#c8c8c8;"></div>
<div style="position:absolute;left:487px;top:571px;width:1px;height:21px;background:#c8c8c8;"></div>
<div style="position:absolute;left:514px;top:571px;width:1px;height:21px;background:#c8c8c8;"></div>
<div style="position:absolute;left:542px;top:571px;width:1px;height:21px;background:#c8c8c8;"></div>
<div style="position:absolute;left:93px;top:574px;font-size:13px;line-height:15px;height:15px;color:#666666;font-weight:400;white-space:nowrap;letter-spacing:-0.25px;width:236px;text-align:left;overflow:hidden;">Arconada</div>
<div style="position:absolute;left:333px;top:574px;font-size:13px;line-height:15px;height:15px;color:#666666;font-weight:400;white-space:nowrap;letter-spacing:-0.25px;width:39px;text-align:center;overflow:hidden;">2013</div>
<div style="position:absolute;left:371px;top:574px;font-size:13px;line-height:15px;height:15px;color:#666666;font-weight:400;white-space:nowrap;letter-spacing:-0.25px;width:33px;text-align:center;overflow:hidden;padding-left:9px;box-sizing:border-box;">7.0</div>
<svg style="position:absolute;left:439px;top:570px" width="16" height="22" viewBox="0 0 16 22"><path d="M1.7 12.7 L5 15.8 L13.2 7.8" fill="none" stroke="#1cbd0a" stroke-width="1.75" stroke-linecap="round" stroke-linejoin="miter"/></svg>
<svg style="position:absolute;left:467px;top:570px" width="16" height="22" viewBox="0 0 16 22"><path d="M1.7 12.7 L5 15.8 L13.2 7.8" fill="none" stroke="#1cbd0a" stroke-width="1.75" stroke-linecap="round" stroke-linejoin="miter"/></svg>
<svg style="position:absolute;left:494px;top:570px" width="16" height="22" viewBox="0 0 16 22"><path d="M1.7 12.7 L5 15.8 L13.2 7.8" fill="none" stroke="#1cbd0a" stroke-width="1.75" stroke-linecap="round" stroke-linejoin="miter"/></svg>
<svg style="position:absolute;left:522px;top:570px" width="16" height="22" viewBox="0 0 16 22"><path d="M3.75 7.65 L11.65 15.55 M11.65 7.65 L3.75 15.55" fill="none" stroke="#d40f0f" stroke-width="1.4" stroke-linecap="round"/></svg>
<svg style="position:absolute;left:549px;top:570px" width="16" height="22" viewBox="0 0 16 22"><path d="M3.75 7.65 L11.65 15.55 M11.65 7.65 L3.75 15.55" fill="none" stroke="#d40f0f" stroke-width="1.4" stroke-linecap="round"/></svg>
<div style="position:absolute;left:91px;top:613px;width:479px;height:1px;background:#c2c2c2;"></div>
<div style="position:absolute;left:330px;top:593px;width:1px;height:21px;background:#c8c8c8;"></div>
<div style="position:absolute;left:370px;top:593px;width:1px;height:21px;background:#c8c8c8;"></div>
<div style="position:absolute;left:404px;top:593px;width:1px;height:21px;background:#c8c8c8;"></div>
<div style="position:absolute;left:431px;top:593px;width:1px;height:21px;background:#c8c8c8;"></div>
<div style="position:absolute;left:459px;top:593px;width:1px;height:21px;background:#c8c8c8;"></div>
<div style="position:absolute;left:487px;top:593px;width:1px;height:21px;background:#c8c8c8;"></div>
<div style="position:absolute;left:514px;top:593px;width:1px;height:21px;background:#c8c8c8;"></div>
<div style="position:absolute;left:542px;top:593px;width:1px;height:21px;background:#c8c8c8;"></div>
<div style="position:absolute;left:93px;top:596px;font-size:13px;line-height:15px;height:15px;color:#666666;font-weight:400;white-space:nowrap;letter-spacing:-0.25px;width:236px;text-align:left;overflow:hidden;">Asterix - Operation Hinkelstein</div>
<div style="position:absolute;left:333px;top:596px;font-size:13px;line-height:15px;height:15px;color:#666666;font-weight:400;white-space:nowrap;letter-spacing:-0.25px;width:39px;text-align:center;overflow:hidden;">1989</div>
<svg style="position:absolute;left:439px;top:592px" width="16" height="22" viewBox="0 0 16 22"><path d="M1.7 12.7 L5 15.8 L13.2 7.8" fill="none" stroke="#1cbd0a" stroke-width="1.75" stroke-linecap="round" stroke-linejoin="miter"/></svg>
<svg style="position:absolute;left:467px;top:592px" width="16" height="22" viewBox="0 0 16 22"><path d="M1.7 12.7 L5 15.8 L13.2 7.8" fill="none" stroke="#1cbd0a" stroke-width="1.75" stroke-linecap="round" stroke-linejoin="miter"/></svg>
<svg style="position:absolute;left:494px;top:592px" width="16" height="22" viewBox="0 0 16 22"><path d="M3.75 7.65 L11.65 15.55 M11.65 7.65 L3.75 15.55" fill="none" stroke="#d40f0f" stroke-width="1.4" stroke-linecap="round"/></svg>
<svg style="position:absolute;left:522px;top:592px" width="16" height="22" viewBox="0 0 16 22"><path d="M3.75 7.65 L11.65 15.55 M11.65 7.65 L3.75 15.55" fill="none" stroke="#d40f0f" stroke-width="1.4" stroke-linecap="round"/></svg>
<svg style="position:absolute;left:549px;top:592px" width="16" height="22" viewBox="0 0 16 22"><path d="M3.75 7.65 L11.65 15.55 M11.65 7.65 L3.75 15.55" fill="none" stroke="#d40f0f" stroke-width="1.4" stroke-linecap="round"/></svg>
<div style="position:absolute;left:91px;top:635px;width:479px;height:1px;background:#c2c2c2;"></div>
<div style="position:absolute;left:330px;top:615px;width:1px;height:21px;background:#c8c8c8;"></div>
<div style="position:absolute;left:370px;top:615px;width:1px;height:21px;background:#c8c8c8;"></div>
<div style="position:absolute;left:404px;top:615px;width:1px;height:21px;background:#c8c8c8;"></div>
<div style="position:absolute;left:431px;top:615px;width:1px;height:21px;background:#c8c8c8;"></div>
<div style="position:absolute;left:459px;top:615px;width:1px;height:21px;background:#c8c8c8;"></div>
<div style="position:absolute;left:487px;top:615px;width:1px;height:21px;background:#c8c8c8;"></div>
<div style="position:absolute;left:514px;top:615px;width:1px;height:21px;background:#c8c8c8;"></div>
<div style="position:absolute;left:542px;top:615px;width:1px;height:21px;background:#c8c8c8;"></div>
<div style="position:absolute;left:93px;top:618px;font-size:13px;line-height:15px;height:15px;color:#666666;font-weight:400;white-space:nowrap;letter-spacing:-0.25px;width:236px;text-align:left;overflow:hidden;">Asterix - Sieg über Cäsar</div>
<div style="position:absolute;left:333px;top:618px;font-size:13px;line-height:15px;height:15px;color:#666666;font-weight:400;white-space:nowrap;letter-spacing:-0.25px;width:39px;text-align:center;overflow:hidden;">1985</div>
<svg style="position:absolute;left:439px;top:614px" width="16" height="22" viewBox="0 0 16 22"><path d="M1.7 12.7 L5 15.8 L13.2 7.8" fill="none" stroke="#1cbd0a" stroke-width="1.75" stroke-linecap="round" stroke-linejoin="miter"/></svg>
<svg style="position:absolute;left:467px;top:614px" width="16" height="22" viewBox="0 0 16 22"><path d="M1.7 12.7 L5 15.8 L13.2 7.8" fill="none" stroke="#1cbd0a" stroke-width="1.75" stroke-linecap="round" stroke-linejoin="miter"/></svg>
<svg style="position:absolute;left:494px;top:614px" width="16" height="22" viewBox="0 0 16 22"><path d="M3.75 7.65 L11.65 15.55 M11.65 7.65 L3.75 15.55" fill="none" stroke="#d40f0f" stroke-width="1.4" stroke-linecap="round"/></svg>
<svg style="position:absolute;left:522px;top:614px" width="16" height="22" viewBox="0 0 16 22"><path d="M3.75 7.65 L11.65 15.55 M11.65 7.65 L3.75 15.55" fill="none" stroke="#d40f0f" stroke-width="1.4" stroke-linecap="round"/></svg>
<svg style="position:absolute;left:549px;top:614px" width="16" height="22" viewBox="0 0 16 22"><path d="M3.75 7.65 L11.65 15.55 M11.65 7.65 L3.75 15.55" fill="none" stroke="#d40f0f" stroke-width="1.4" stroke-linecap="round"/></svg>
<div style="position:absolute;left:91px;top:657px;width:479px;height:1px;background:#c2c2c2;"></div>
<div style="position:absolute;left:330px;top:637px;width:1px;height:21px;background:#c8c8c8;"></div>
<div style="position:absolute;left:370px;top:637px;width:1px;height:21px;background:#c8c8c8;"></div>
<div style="position:absolute;left:404px;top:637px;width:1px;height:21px;background:#c8c8c8;"></div>
<div style="position:absolute;left:431px;top:637px;width:1px;height:21px;background:#c8c8c8;"></div>
<div style="position:absolute;left:459px;top:637px;width:1px;height:21px;background:#c8c8c8;"></div>
<div style="position:absolute;left:487px;top:637px;width:1px;height:21px;background:#c8c8c8;"></div>
<div style="position:absolute;left:514px;top:637px;width:1px;height:21px;background:#c8c8c8;"></div>
<div style="position:absolute;left:542px;top:637px;width:1px;height:21px;background:#c8c8c8;"></div>
<div style="position:absolute;left:93px;top:640px;font-size:13px;line-height:15px;height:15px;color:#666666;font-weight:400;white-space:nowrap;letter-spacing:-0.25px;width:236px;text-align:left;overflow:hidden;">Asterix and Cleopatra</div>
<div style="position:absolute;left:333px;top:640px;font-size:13px;line-height:15px;height:15px;color:#666666;font-weight:400;white-space:nowrap;letter-spacing:-0.25px;width:39px;text-align:center;overflow:hidden;">1968</div>
<div style="position:absolute;left:371px;top:640px;font-size:13px;line-height:15px;height:15px;color:#666666;font-weight:400;white-space:nowrap;letter-spacing:-0.25px;width:33px;text-align:center;overflow:hidden;padding-left:9px;box-sizing:border-box;">6.9</div>
<svg style="position:absolute;left:439px;top:636px" width="16" height="22" viewBox="0 0 16 22"><path d="M1.7 12.7 L5 15.8 L13.2 7.8" fill="none" stroke="#1cbd0a" stroke-width="1.75" stroke-linecap="round" stroke-linejoin="miter"/></svg>
<svg style="position:absolute;left:467px;top:636px" width="16" height="22" viewBox="0 0 16 22"><path d="M1.7 12.7 L5 15.8 L13.2 7.8" fill="none" stroke="#1cbd0a" stroke-width="1.75" stroke-linecap="round" stroke-linejoin="miter"/></svg>
<svg style="position:absolute;left:494px;top:636px" width="16" height="22" viewBox="0 0 16 22"><path d="M3.75 7.65 L11.65 15.55 M11.65 7.65 L3.75 15.55" fill="none" stroke="#d40f0f" stroke-width="1.4" stroke-linecap="round"/></svg>
<svg style="position:absolute;left:522px;top:636px" width="16" height="22" viewBox="0 0 16 22"><path d="M3.75 7.65 L11.65 15.55 M11.65 7.65 L3.75 15.55" fill="none" stroke="#d40f0f" stroke-width="1.4" stroke-linecap="round"/></svg>
<svg style="position:absolute;left:549px;top:636px" width="16" height="22" viewBox="0 0 16 22"><path d="M3.75 7.65 L11.65 15.55 M11.65 7.65 L3.75 15.55" fill="none" stroke="#d40f0f" stroke-width="1.4" stroke-linecap="round"/></svg>
<div style="position:absolute;left:91px;top:679px;width:479px;height:1px;background:#c2c2c2;"></div>
<div style="position:absolute;left:330px;top:659px;width:1px;height:21px;background:#c8c8c8;"></div>
<div style="position:absolute;left:370px;top:659px;width:1px;height:21px;background:#c8c8c8;"></div>
<div style="position:absolute;left:404px;top:659px;width:1px;height:21px;background:#c8c8c8;"></div>
<div style="position:absolute;left:431px;top:659px;width:1px;height:21px;background:#c8c8c8;"></div>
<div style="position:absolute;left:459px;top:659px;width:1px;height:21px;background:#c8c8c8;"></div>
<div style="position:absolute;left:487px;top:659px;width:1px;height:21px;background:#c8c8c8;"></div>
<div style="position:absolute;left:514px;top:659px;width:1px;height:21px;background:#c8c8c8;"></div>
<div style="position:absolute;left:542px;top:659px;width:1px;height:21px;background:#c8c8c8;"></div>
<div style="position:absolute;left:93px;top:662px;font-size:13px;line-height:15px;height:15px;color:#666666;font-weight:400;white-space:nowrap;letter-spacing:-0.25px;width:236px;text-align:left;overflow:hidden;">Asterix and the Vikings</div>
<div style="position:absolute;left:333px;top:662px;font-size:13px;line-height:15px;height:15px;color:#666666;font-weight:400;white-space:nowrap;letter-spacing:-0.25px;width:39px;text-align:center;overflow:hidden;">2006</div>
<div style="position:absolute;left:371px;top:662px;font-size:13px;line-height:15px;height:15px;color:#666666;font-weight:400;white-space:nowrap;letter-spacing:-0.25px;width:33px;text-align:center;overflow:hidden;padding-left:9px;box-sizing:border-box;">6.0</div>
<svg style="position:absolute;left:439px;top:658px" width="16" height="22" viewBox="0 0 16 22"><path d="M1.7 12.7 L5 15.8 L13.2 7.8" fill="none" stroke="#1cbd0a" stroke-width="1.75" stroke-linecap="round" stroke-linejoin="miter"/></svg>
<svg style="position:absolute;left:467px;top:658px" width="16" height="22" viewBox="0 0 16 22"><path d="M1.7 12.7 L5 15.8 L13.2 7.8" fill="none" stroke="#1cbd0a" stroke-width="1.75" stroke-linecap="round" stroke-linejoin="miter"/></svg>
<svg style="position:absolute;left:494px;top:658px" width="16" height="22" viewBox="0 0 16 22"><path d="M3.75 7.65 L11.65 15.55 M11.65 7.65 L3.75 15.55" fill="none" stroke="#d40f0f" stroke-width="1.4" stroke-linecap="round"/></svg>
<svg style="position:absolute;left:522px;top:658px" width="16" height="22" viewBox="0 0 16 22"><path d="M3.75 7.65 L11.65 15.55 M11.65 7.65 L3.75 15.55" fill="none" stroke="#d40f0f" stroke-width="1.4" stroke-linecap="round"/></svg>
<svg style="position:absolute;left:549px;top:658px" width="16" height="22" viewBox="0 0 16 22"><path d="M3.75 7.65 L11.65 15.55 M11.65 7.65 L3.75 15.55" fill="none" stroke="#d40f0f" stroke-width="1.4" stroke-linecap="round"/></svg>
<div style="position:absolute;left:91px;top:701px;width:479px;height:1px;background:#c2c2c2;"></div>
<div style="position:absolute;left:330px;top:681px;width:1px;height:21px;background:#c8c8c8;"></div>
<div style="position:absolute;left:370px;top:681px;width:1px;height:21px;background:#c8c8c8;"></div>
<div style="position:absolute;left:404px;top:681px;width:1px;height:21px;background:#c8c8c8;"></div>
<div style="position:absolute;left:431px;top:681px;width:1px;height:21px;background:#c8c8c8;"></div>
<div style="position:absolute;left:459px;top:681px;width:1px;height:21px;background:#c8c8c8;"></div>
<div style="position:absolute;left:487px;top:681px;width:1px;height:21px;background:#c8c8c8;"></div>
<div style="position:absolute;left:514px;top:681px;width:1px;height:21px;background:#c8c8c8;"></div>
<div style="position:absolute;left:542px;top:681px;width:1px;height:21px;background:#c8c8c8;"></div>
<div style="position:absolute;left:93px;top:684px;font-size:13px;line-height:15px;height:15px;color:#666666;font-weight:400;white-space:nowrap;letter-spacing:-0.25px;width:236px;text-align:left;overflow:hidden;">Asterix bei den Briten</div>
<div style="position:absolute;left:333px;top:684px;font-size:13px;line-height:15px;height:15px;color:#666666;font-weight:400;white-space:nowrap;letter-spacing:-0.25px;width:39px;text-align:center;overflow:hidden;">1986</div>
<svg style="position:absolute;left:439px;top:680px" width="16" height="22" viewBox="0 0 16 22"><path d="M1.7 12.7 L5 15.8 L13.2 7.8" fill="none" stroke="#1cbd0a" stroke-width="1.75" stroke-linecap="round" stroke-linejoin="miter"/></svg>
<svg style="position:absolute;left:467px;top:680px" width="16" height="22" viewBox="0 0 16 22"><path d="M1.7 12.7 L5 15.8 L13.2 7.8" fill="none" stroke="#1cbd0a" stroke-width="1.75" stroke-linecap="round" stroke-linejoin="miter"/></svg>
<svg style="position:absolute;left:494px;top:680px" width="16" height="22" viewBox="0 0 16 22"><path d="M3.75 7.65 L11.65 15.55 M11.65 7.65 L3.75 15.55" fill="none" stroke="#d40f0f" stroke-width="1.4" stroke-linecap="round"/></svg>
<svg style="position:absolute;left:522px;top:680px" width="16" height="22" viewBox="0 0 16 22"><path d="M3.75 7.65 L11.65 15.55 M11.65 7.65 L3.75 15.55" fill="none" stroke="#d40f0f" stroke-width="1.4" stroke-linecap="round"/></svg>
<svg style="position:absolute;left:549px;top:680px" width="16" height="22" viewBox="0 0 16 22"><path d="M3.75 7.65 L11.65 15.55 M11.65 7.65 L3.75 15.55" fill="none" stroke="#d40f0f" stroke-width="1.4" stroke-linecap="round"/></svg>
<div style="position:absolute;left:91px;top:723px;width:479px;height:1px;background:#c2c2c2;"></div>
<div style="position:absolute;left:330px;top:703px;width:1px;height:21px;background:#c8c8c8;"></div>
<div style="position:absolute;left:370px;top:703px;width:1px;height:21px;background:#c8c8c8;"></div>
<div style="position:absolute;left:404px;top:703px;width:1px;height:21px;background:#c8c8c8;"></div>
<div style="position:absolute;left:431px;top:703px;width:1px;height:21px;background:#c8c8c8;"></div>
<div style="position:absolute;left:459px;top:703px;width:1px;height:21px;background:#c8c8c8;"></div>
<div style="position:absolute;left:487px;top:703px;width:1px;height:21px;background:#c8c8c8;"></div>
<div style="position:absolute;left:514px;top:703px;width:1px;height:21px;background:#c8c8c8;"></div>
<div style="position:absolute;left:542px;top:703px;width:1px;height:21px;background:#c8c8c8;"></div>
<div style="position:absolute;left:93px;top:706px;font-size:13px;line-height:15px;height:15px;color:#666666;font-weight:400;white-space:nowrap;letter-spacing:-0.25px;width:236px;text-align:left;overflow:hidden;">Asterix Conquers America</div>
<div style="position:absolute;left:333px;top:706px;font-size:13px;line-height:15px;height:15px;color:#666666;font-weight:400;white-space:nowrap;letter-spacing:-0.25px;width:39px;text-align:center;overflow:hidden;">1994</div>
<div style="position:absolute;left:371px;top:706px;font-size:13px;line-height:15px;height:15px;color:#666666;font-weight:400;white-space:nowrap;letter-spacing:-0.25px;width:33px;text-align:center;overflow:hidden;padding-left:9px;box-sizing:border-box;">6.1</div>
<svg style="position:absolute;left:439px;top:702px" width="16" height="22" viewBox="0 0 16 22"><path d="M1.7 12.7 L5 15.8 L13.2 7.8" fill="none" stroke="#1cbd0a" stroke-width="1.75" stroke-linecap="round" stroke-linejoin="miter"/></svg>
<svg style="position:absolute;left:467px;top:702px" width="16" height="22" viewBox="0 0 16 22"><path d="M1.7 12.7 L5 15.8 L13.2 7.8" fill="none" stroke="#1cbd0a" stroke-width="1.75" stroke-linecap="round" stroke-linejoin="miter"/></svg>
<svg style="position:absolute;left:494px;top:702px" width="16" height="22" viewBox="0 0 16 22"><path d="M3.75 7.65 L11.65 15.55 M11.65 7.65 L3.75 15.55" fill="none" stroke="#d40f0f" stroke-width="1.4" stroke-linecap="round"/></svg>
<svg style="position:absolute;left:522px;top:702px" width="16" height="22" viewBox="0 0 16 22"><path d="M3.75 7.65 L11.65 15.55 M11.65 7.65 L3.75 15.55" fill="none" stroke="#d40f0f" stroke-width="1.4" stroke-linecap="round"/></svg>
<svg style="position:absolute;left:549px;top:702px" width="16" height="22" viewBox="0 0 16 22"><path d="M3.75 7.65 L11.65 15.55 M11.65 7.65 L3.75 15.55" fill="none" stroke="#d40f0f" stroke-width="1.4" stroke-linecap="round"/></svg>
<div style="position:absolute;left:91px;top:745px;width:479px;height:1px;background:#c2c2c2;"></div>
<div style="position:absolute;left:330px;top:725px;width:1px;height:21px;background:#c8c8c8;"></div>
<div style="position:absolute;left:370px;top:725px;width:1px;height:21px;background:#c8c8c8;"></div>
<div style="position:absolute;left:404px;top:725px;width:1px;height:21px;background:#c8c8c8;"></div>
<div style="position:absolute;left:431px;top:725px;width:1px;height:21px;background:#c8c8c8;"></div>
<div style="position:absolute;left:459px;top:725px;width:1px;height:21px;background:#c8c8c8;"></div>
<div style="position:absolute;left:487px;top:725px;width:1px;height:21px;background:#c8c8c8;"></div>
<div style="position:absolute;left:514px;top:725px;width:1px;height:21px;background:#c8c8c8;"></div>
<div style="position:absolute;left:542px;top:725px;width:1px;height:21px;background:#c8c8c8;"></div>
<div style="position:absolute;left:93px;top:728px;font-size:13px;line-height:15px;height:15px;color:#666666;font-weight:400;white-space:nowrap;letter-spacing:-0.25px;width:236px;text-align:left;overflow:hidden;">Asterix der Gallier</div>
<div style="position:absolute;left:333px;top:728px;font-size:13px;line-height:15px;height:15px;color:#666666;font-weight:400;white-space:nowrap;letter-spacing:-0.25px;width:39px;text-align:center;overflow:hidden;">1967</div>
<svg style="position:absolute;left:439px;top:724px" width="16" height="22" viewBox="0 0 16 22"><path d="M1.7 12.7 L5 15.8 L13.2 7.8" fill="none" stroke="#1cbd0a" stroke-width="1.75" stroke-linecap="round" stroke-linejoin="miter"/></svg>
<svg style="position:absolute;left:467px;top:724px" width="16" height="22" viewBox="0 0 16 22"><path d="M1.7 12.7 L5 15.8 L13.2 7.8" fill="none" stroke="#1cbd0a" stroke-width="1.75" stroke-linecap="round" stroke-linejoin="miter"/></svg>
<svg style="position:absolute;left:494px;top:724px" width="16" height="22" viewBox="0 0 16 22"><path d="M1.7 12.7 L5 15.8 L13.2 7.8" fill="none" stroke="#1cbd0a" stroke-width="1.75" stroke-linecap="round" stroke-linejoin="miter"/></svg>
<svg style="position:absolute;left:522px;top:724px" width="16" height="22" viewBox="0 0 16 22"><path d="M3.75 7.65 L11.65 15.55 M11.65 7.65 L3.75 15.55" fill="none" stroke="#d40f0f" stroke-width="1.4" stroke-linecap="round"/></svg>
<svg style="position:absolute;left:549px;top:724px" width="16" height="22" viewBox="0 0 16 22"><path d="M3.75 7.65 L11.65 15.55 M11.65 7.65 L3.75 15.55" fill="none" stroke="#d40f0f" stroke-width="1.4" stroke-linecap="round"/></svg>
<div style="position:absolute;left:91px;top:767px;width:479px;height:1px;background:#c2c2c2;"></div>
<div style="position:absolute;left:330px;top:747px;width:1px;height:21px;background:#c8c8c8;"></div>
<div style="position:absolute;left:370px;top:747px;width:1px;height:21px;background:#c8c8c8;"></div>
<div style="position:absolute;left:404px;top:747px;width:1px;height:21px;background:#c8c8c8;"></div>
<div style="position:absolute;left:431px;top:747px;width:1px;height:21px;background:#c8c8c8;"></div>
<div style="position:absolute;left:459px;top:747px;width:1px;height:21px;background:#c8c8c8;"></div>
<div style="position:absolute;left:487px;top:747px;width:1px;height:21px;background:#c8c8c8;"></div>
<div style="position:absolute;left:514px;top:747px;width:1px;height:21px;background:#c8c8c8;"></div>
<div style="position:absolute;left:542px;top:747px;width:1px;height:21px;background:#c8c8c8;"></div>
<div style="position:absolute;left:93px;top:750px;font-size:13px;line-height:15px;height:15px;color:#666666;font-weight:400;white-space:nowrap;letter-spacing:-0.25px;width:236px;text-align:left;overflow:hidden;">A-Team, The</div>
<div style="position:absolute;left:333px;top:750px;font-size:13px;line-height:15px;height:15px;color:#666666;font-weight:400;white-space:nowrap;letter-spacing:-0.25px;width:39px;text-align:center;overflow:hidden;">2010</div>
<div style="position:absolute;left:371px;top:750px;font-size:13px;line-height:15px;height:15px;color:#666666;font-weight:400;white-space:nowrap;letter-spacing:-0.25px;width:33px;text-align:center;overflow:hidden;padding-left:9px;box-sizing:border-box;">6.2</div>
<svg style="position:absolute;left:439px;top:746px" width="16" height="22" viewBox="0 0 16 22"><path d="M1.7 12.7 L5 15.8 L13.2 7.8" fill="none" stroke="#1cbd0a" stroke-width="1.75" stroke-linecap="round" stroke-linejoin="miter"/></svg>
<svg style="position:absolute;left:467px;top:746px" width="16" height="22" viewBox="0 0 16 22"><path d="M1.7 12.7 L5 15.8 L13.2 7.8" fill="none" stroke="#1cbd0a" stroke-width="1.75" stroke-linecap="round" stroke-linejoin="miter"/></svg>
<svg style="position:absolute;left:494px;top:746px" width="16" height="22" viewBox="0 0 16 22"><path d="M3.75 7.65 L11.65 15.55 M11.65 7.65 L3.75 15.55" fill="none" stroke="#d40f0f" stroke-width="1.4" stroke-linecap="round"/></svg>
<svg style="position:absolute;left:522px;top:746px" width="16" height="22" viewBox="0 0 16 22"><path d="M3.75 7.65 L11.65 15.55 M11.65 7.65 L3.75 15.55" fill="none" stroke="#d40f0f" stroke-width="1.4" stroke-linecap="round"/></svg>
<svg style="position:absolute;left:549px;top:746px" width="16" height="22" viewBox="0 0 16 22"><path d="M3.75 7.65 L11.65 15.55 M11.65 7.65 L3.75 15.55" fill="none" stroke="#d40f0f" stroke-width="1.4" stroke-linecap="round"/></svg>
<div style="position:absolute;left:91px;top:789px;width:479px;height:1px;background:#c2c2c2;"></div>
<div style="position:absolute;left:330px;top:769px;width:1px;height:21px;background:#c8c8c8;"></div>
<div style="position:absolute;left:370px;top:769px;width:1px;height:21px;background:#c8c8c8;"></div>
<div style="position:absolute;left:404px;top:769px;width:1px;height:21px;background:#c8c8c8;"></div>
<div style="position:absolute;left:431px;top:769px;width:1px;height:21px;background:#c8c8c8;"></div>
<div style="position:absolute;left:459px;top:769px;width:1px;height:21px;background:#c8c8c8;"></div>
<div style="position:absolute;left:487px;top:769px;width:1px;height:21px;background:#c8c8c8;"></div>
<div style="position:absolute;left:514px;top:769px;width:1px;height:21px;background:#c8c8c8;"></div>
<div style="position:absolute;left:542px;top:769px;width:1px;height:21px;background:#c8c8c8;"></div>
<div style="position:absolute;left:93px;top:772px;font-size:13px;line-height:15px;height:15px;color:#666666;font-weight:400;white-space:nowrap;letter-spacing:-0.25px;width:236px;text-align:left;overflow:hidden;">Australia</div>
<div style="position:absolute;left:333px;top:772px;font-size:13px;line-height:15px;height:15px;color:#666666;font-weight:400;white-space:nowrap;letter-spacing:-0.25px;width:39px;text-align:center;overflow:hidden;">2008</div>
<div style="position:absolute;left:371px;top:772px;font-size:13px;line-height:15px;height:15px;color:#666666;font-weight:400;white-space:nowrap;letter-spacing:-0.25px;width:33px;text-align:center;overflow:hidden;padding-left:9px;box-sizing:border-box;">6.4</div>
<svg style="position:absolute;left:439px;top:768px" width="16" height="22" viewBox="0 0 16 22"><path d="M1.7 12.7 L5 15.8 L13.2 7.8" fill="none" stroke="#1cbd0a" stroke-width="1.75" stroke-linecap="round" stroke-linejoin="miter"/></svg>
<svg style="position:absolute;left:467px;top:768px" width="16" height="22" viewBox="0 0 16 22"><path d="M1.7 12.7 L5 15.8 L13.2 7.8" fill="none" stroke="#1cbd0a" stroke-width="1.75" stroke-linecap="round" stroke-linejoin="miter"/></svg>
<svg style="position:absolute;left:494px;top:768px" width="16" height="22" viewBox="0 0 16 22"><path d="M1.7 12.7 L5 15.8 L13.2 7.8" fill="none" stroke="#1cbd0a" stroke-width="1.75" stroke-linecap="round" stroke-linejoin="miter"/></svg>
<svg style="position:absolute;left:522px;top:768px" width="16" height="22" viewBox="0 0 16 22"><path d="M3.75 7.65 L11.65 15.55 M11.65 7.65 L3.75 15.55" fill="none" stroke="#d40f0f" stroke-width="1.4" stroke-linecap="round"/></svg>
<svg style="position:absolute;left:549px;top:768px" width="16" height="22" viewBox="0 0 16 22"><path d="M3.75 7.65 L11.65 15.55 M11.65 7.65 L3.75 15.55" fill="none" stroke="#d40f0f" stroke-width="1.4" stroke-linecap="round"/></svg>
<div style="position:absolute;left:91px;top:811px;width:479px;height:1px;background:#c2c2c2;"></div>
<div style="position:absolute;left:330px;top:791px;width:1px;height:21px;background:#c8c8c8;"></div>
<div style="position:absolute;left:370px;top:791px;width:1px;height:21px;background:#c8c8c8;"></div>
<div style="position:absolute;left:404px;top:791px;width:1px;height:21px;background:#c8c8c8;"></div>
<div style="position:absolute;left:431px;top:791px;width:1px;height:21px;background:#c8c8c8;"></div>
<div style="position:absolute;left:459px;top:791px;width:1px;height:21px;background:#c8c8c8;"></div>
<div style="position:absolute;left:487px;top:791px;width:1px;height:21px;background:#c8c8c8;"></div>
<div style="position:absolute;left:514px;top:791px;width:1px;height:21px;background:#c8c8c8;"></div>
<div style="position:absolute;left:542px;top:791px;width:1px;height:21px;background:#c8c8c8;"></div>
<div style="position:absolute;left:93px;top:794px;font-size:13px;line-height:15px;height:15px;color:#666666;font-weight:400;white-space:nowrap;letter-spacing:-0.25px;width:236px;text-align:left;overflow:hidden;">Bad Company</div>
<div style="position:absolute;left:333px;top:794px;font-size:13px;line-height:15px;height:15px;color:#666666;font-weight:400;white-space:nowrap;letter-spacing:-0.25px;width:39px;text-align:center;overflow:hidden;">2002</div>
<div style="position:absolute;left:371px;top:794px;font-size:13px;line-height:15px;height:15px;color:#666666;font-weight:400;white-space:nowrap;letter-spacing:-0.25px;width:33px;text-align:center;overflow:hidden;padding-left:9px;box-sizing:border-box;">5.4</div>
<svg style="position:absolute;left:439px;top:790px" width="16" height="22" viewBox="0 0 16 22"><path d="M1.7 12.7 L5 15.8 L13.2 7.8" fill="none" stroke="#1cbd0a" stroke-width="1.75" stroke-linecap="round" stroke-linejoin="miter"/></svg>
<svg style="position:absolute;left:467px;top:790px" width="16" height="22" viewBox="0 0 16 22"><path d="M1.7 12.7 L5 15.8 L13.2 7.8" fill="none" stroke="#1cbd0a" stroke-width="1.75" stroke-linecap="round" stroke-linejoin="miter"/></svg>
<svg style="position:absolute;left:494px;top:790px" width="16" height="22" viewBox="0 0 16 22"><path d="M1.7 12.7 L5 15.8 L13.2 7.8" fill="none" stroke="#1cbd0a" stroke-width="1.75" stroke-linecap="round" stroke-linejoin="miter"/></svg>
<svg style="position:absolute;left:522px;top:790px" width="16" height="22" viewBox="0 0 16 22"><path d="M3.75 7.65 L11.65 15.55 M11.65 7.65 L3.75 15.55" fill="none" stroke="#d40f0f" stroke-width="1.4" stroke-linecap="round"/></svg>
<svg style="position:absolute;left:549px;top:790px" width="16" height="22" viewBox="0 0 16 22"><path d="M3.75 7.65 L11.65 15.55 M11.65 7.65 L3.75 15.55" fill="none" stroke="#d40f0f" stroke-width="1.4" stroke-linecap="round"/></svg>
<div style="position:absolute;left:91px;top:833px;width:479px;height:1px;background:#c2c2c2;"></div>
<div style="position:absolute;left:330px;top:813px;width:1px;height:21px;background:#c8c8c8;"></div>
<div style="position:absolute;left:370px;top:813px;width:1px;height:21px;background:#c8c8c8;"></div>
<div style="position:absolute;left:404px;top:813px;width:1px;height:21px;background:#c8c8c8;"></div>
<div style="position:absolute;left:431px;top:813px;width:1px;height:21px;background:#c8c8c8;"></div>
<div style="position:absolute;left:459px;top:813px;width:1px;height:21px;background:#c8c8c8;"></div>
<div style="position:absolute;left:487px;top:813px;width:1px;height:21px;background:#c8c8c8;"></div>
<div style="position:absolute;left:514px;top:813px;width:1px;height:21px;background:#c8c8c8;"></div>
<div style="position:absolute;left:542px;top:813px;width:1px;height:21px;background:#c8c8c8;"></div>
<div style="position:absolute;left:93px;top:816px;font-size:13px;line-height:15px;height:15px;color:#666666;font-weight:400;white-space:nowrap;letter-spacing:-0.25px;width:236px;text-align:left;overflow:hidden;">Bambi</div>
<div style="position:absolute;left:333px;top:816px;font-size:13px;line-height:15px;height:15px;color:#666666;font-weight:400;white-space:nowrap;letter-spacing:-0.25px;width:39px;text-align:center;overflow:hidden;">1942</div>
<div style="position:absolute;left:371px;top:816px;font-size:13px;line-height:15px;height:15px;color:#666666;font-weight:400;white-space:nowrap;letter-spacing:-0.25px;width:33px;text-align:center;overflow:hidden;padding-left:9px;box-sizing:border-box;">6.9</div>
<svg style="position:absolute;left:439px;top:812px" width="16" height="22" viewBox="0 0 16 22"><path d="M1.7 12.7 L5 15.8 L13.2 7.8" fill="none" stroke="#1cbd0a" stroke-width="1.75" stroke-linecap="round" stroke-linejoin="miter"/></svg>
<svg style="position:absolute;left:467px;top:812px" width="16" height="22" viewBox="0 0 16 22"><path d="M1.7 12.7 L5 15.8 L13.2 7.8" fill="none" stroke="#1cbd0a" stroke-width="1.75" stroke-linecap="round" stroke-linejoin="miter"/></svg>
<svg style="position:absolute;left:494px;top:812px" width="16" height="22" viewBox="0 0 16 22"><path d="M1.7 12.7 L5 15.8 L13.2 7.8" fill="none" stroke="#1cbd0a" stroke-width="1.75" stroke-linecap="round" stroke-linejoin="miter"/></svg>
<svg style="position:absolute;left:522px;top:812px" width="16" height="22" viewBox="0 0 16 22"><path d="M3.75 7.65 L11.65 15.55 M11.65 7.65 L3.75 15.55" fill="none" stroke="#d40f0f" stroke-width="1.4" stroke-linecap="round"/></svg>
<svg style="position:absolute;left:549px;top:812px" width="16" height="22" viewBox="0 0 16 22"><path d="M3.75 7.65 L11.65 15.55 M11.65 7.65 L3.75 15.55" fill="none" stroke="#d40f0f" stroke-width="1.4" stroke-linecap="round"/></svg>
<div style="position:absolute;left:91px;top:855px;width:479px;height:1px;background:#c2c2c2;"></div>
<div style="position:absolute;left:330px;top:835px;width:1px;height:21px;background:#c8c8c8;"></div>
<div style="position:absolute;left:370px;top:835px;width:1px;height:21px;background:#c8c8c8;"></div>
<div style="position:absolute;left:404px;top:835px;width:1px;height:21px;background:#c8c8c8;"></div>
<div style="position:absolute;left:431px;top:835px;width:1px;height:21px;background:#c8c8c8;"></div>
<div style="position:absolute;left:459px;top:835px;width:1px;height:21px;background:#c8c8c8;"></div>
<div style="position:absolute;left:487px;top:835px;width:1px;height:21px;background:#c8c8c8;"></div>
<div style="position:absolute;left:514px;top:835px;width:1px;height:21px;background:#c8c8c8;"></div>
<div style="position:absolute;left:542px;top:835px;width:1px;height:21px;background:#c8c8c8;"></div>
<div style="position:absolute;left:93px;top:838px;font-size:13px;line-height:15px;height:15px;color:#666666;font-weight:400;white-space:nowrap;letter-spacing:-0.25px;width:236px;text-align:left;overflow:hidden;">Bambi II</div>
<div style="position:absolute;left:333px;top:838px;font-size:13px;line-height:15px;height:15px;color:#666666;font-weight:400;white-space:nowrap;letter-spacing:-0.25px;width:39px;text-align:center;overflow:hidden;">2006</div>
<div style="position:absolute;left:371px;top:838px;font-size:13px;line-height:15px;height:15px;color:#666666;font-weight:400;white-space:nowrap;letter-spacing:-0.25px;width:33px;text-align:center;overflow:hidden;padding-left:9px;box-sizing:border-box;">6.1</div>
<svg style="position:absolute;left:439px;top:834px" width="16" height="22" viewBox="0 0 16 22"><path d="M1.7 12.7 L5 15.8 L13.2 7.8" fill="none" stroke="#1cbd0a" stroke-width="1.75" stroke-linecap="round" stroke-linejoin="miter"/></svg>
<svg style="position:absolute;left:467px;top:834px" width="16" height="22" viewBox="0 0 16 22"><path d="M1.7 12.7 L5 15.8 L13.2 7.8" fill="none" stroke="#1cbd0a" stroke-width="1.75" stroke-linecap="round" stroke-linejoin="miter"/></svg>
<svg style="position:absolute;left:494px;top:834px" width="16" height="22" viewBox="0 0 16 22"><path d="M3.75 7.65 L11.65 15.55 M11.65 7.65 L3.75 15.55" fill="none" stroke="#d40f0f" stroke-width="1.4" stroke-linecap="round"/></svg>
<svg style="position:absolute;left:522px;top:834px" width="16" height="22" viewBox="0 0 16 22"><path d="M3.75 7.65 L11.65 15.55 M11.65 7.65 L3.75 15.55" fill="none" stroke="#d40f0f" stroke-width="1.4" stroke-linecap="round"/></svg>
<svg style="position:absolute;left:549px;top:834px" width="16" height="22" viewBox="0 0 16 22"><path d="M3.75 7.65 L11.65 15.55 M11.65 7.65 L3.75 15.55" fill="none" stroke="#d40f0f" stroke-width="1.4" stroke-linecap="round"/></svg>
<div style="position:absolute;left:330px;top:857px;width:1px;height:3px;background:#c8c8c8;"></div>
<div style="position:absolute;left:370px;top:857px;width:1px;height:3px;background:#c8c8c8;"></div>
<div style="position:absolute;left:404px;top:857px;width:1px;height:3px;background:#c8c8c8;"></div>
<div style="position:absolute;left:431px;top:857px;width:1px;height:3px;background:#c8c8c8;"></div>
<div style="position:absolute;left:459px;top:857px;width:1px;height:3px;background:#c8c8c8;"></div>
<div style="position:absolute;left:487px;top:857px;width:1px;height:3px;background:#c8c8c8;"></div>
<div style="position:absolute;left:514px;top:857px;width:1px;height:3px;background:#c8c8c8;"></div>
<div style="position:absolute;left:542px;top:857px;width:1px;height:3px;background:#c8c8c8;"></div>
<div style="position:absolute;left:570px;top:194px;width:1px;height:666px;background:#c0c0c0;"></div>
<div style="position:absolute;left:575px;top:222px;width:8px;height:634px;background:#fff;border-radius:4px"></div>
<div style="position:absolute;left:576px;top:243px;width:6px;height:27px;background:#848484;border-radius:3px"></div>
<div style="position:absolute;left:86px;top:861px;width:502px;height:1px;background:#cccccc;"></div>
<div style="position:absolute;left:86px;top:870px;font-size:13px;line-height:15px;height:15px;color:#666666;font-weight:400;white-space:nowrap;letter-spacing:-0.25px;">Movies:&nbsp; 476&nbsp; of&nbsp; 476</div>
<div style="position:absolute;left:388px;top:870px;font-size:13px;line-height:15px;height:15px;color:#666666;font-weight:400;white-space:nowrap;letter-spacing:-0.25px;width:200px;text-align:right;overflow:hidden;">1 movie(s) selected (0.02 G)</div>
<div style="position:absolute;left:625px;top:165px;font-size:13.2px;line-height:15px;height:15px;color:#666666;font-weight:700;white-space:nowrap;letter-spacing:-0.1px;">Path</div>
<div style="position:absolute;left:704px;top:165px;font-size:13px;line-height:15px;height:15px;color:#2f7fe0;font-weight:400;white-space:nowrap;letter-spacing:-0.16px;text-decoration:underline;">/media/movies/Aladdin Collection/Aladdin (1992)</div>
<div style="position:absolute;left:625px;top:189px;font-size:13.2px;line-height:15px;height:15px;color:#666666;font-weight:700;white-space:nowrap;letter-spacing:-0.1px;">Date added</div>
<div style="position:absolute;left:704px;top:189px;font-size:13px;line-height:15px;height:15px;color:#666666;font-weight:400;white-space:nowrap;letter-spacing:-0.25px;">19.07.2023, 17:39</div>
<div style="position:absolute;left:948px;top:189px;font-size:13.2px;line-height:15px;height:15px;color:#666666;font-weight:700;white-space:nowrap;letter-spacing:-0.1px;">Watched</div>
<div style="position:absolute;left:1010px;top:189px;width:14px;height:14px;box-sizing:border-box;border:1px solid #c4c4c4;border-radius:2px;background:#efefef"></div>
<svg style="position:absolute;left:1010px;top:189px;" width="14" height="14" viewBox="0 0 14 14"><path d="M3.4 7.4 L6 10 L10.6 3.8" fill="none" stroke="#b4b4b4" stroke-width="1.5"/></svg>
<div style="position:absolute;left:625px;top:213px;font-size:13.2px;line-height:15px;height:15px;color:#666666;font-weight:700;white-space:nowrap;letter-spacing:-0.1px;">Original file</div>
<div style="position:absolute;left:704px;top:213px;font-size:13px;line-height:15px;height:15px;color:#666666;font-weight:400;white-space:nowrap;letter-spacing:-0.25px;">Aladdin (1992).mkv</div>
<div style="position:absolute;left:625px;top:236px;width:767px;height:1px;background:#cfcfcf;"></div>
<div style="position:absolute;left:625px;top:245px;font-size:13.2px;line-height:15px;height:15px;color:#666666;font-weight:700;white-space:nowrap;letter-spacing:-0.1px;">Video</div>
<div style="position:absolute;left:704px;top:245px;font-size:13.2px;line-height:15px;height:15px;color:#666666;font-weight:700;white-space:nowrap;letter-spacing:-0.1px;">Source</div>
<div style="position:absolute;left:948px;top:245px;font-size:13.2px;line-height:15px;height:15px;color:#666666;font-weight:700;white-space:nowrap;letter-spacing:-0.1px;">HDR format</div>
<div style="position:absolute;left:704px;top:268px;font-size:13.2px;line-height:15px;height:15px;color:#666666;font-weight:700;white-space:nowrap;letter-spacing:-0.1px;">Runtime</div>
<div style="position:absolute;left:809px;top:268px;font-size:13px;line-height:15px;height:15px;color:#666666;font-weight:400;white-space:nowrap;letter-spacing:-0.25px;">1h 30m 00s</div>
<div style="position:absolute;left:948px;top:268px;font-size:13.2px;line-height:15px;height:15px;color:#666666;font-weight:700;white-space:nowrap;letter-spacing:-0.1px;">Video bit depth</div>
<div style="position:absolute;left:1047px;top:268px;font-size:13px;line-height:15px;height:15px;color:#666666;font-weight:400;white-space:nowrap;letter-spacing:-0.25px;">8 bit</div>
<div style="position:absolute;left:704px;top:291px;font-size:13.2px;line-height:15px;height:15px;color:#666666;font-weight:700;white-space:nowrap;letter-spacing:-0.1px;">Video codec</div>
<div style="position:absolute;left:809px;top:291px;font-size:13px;line-height:15px;height:15px;color:#666666;font-weight:400;white-space:nowrap;letter-spacing:-0.25px;">h264</div>
<div style="position:absolute;left:948px;top:291px;font-size:13.2px;line-height:15px;height:15px;color:#666666;font-weight:700;white-space:nowrap;letter-spacing:-0.1px;">Frame rate</div>
<div style="position:absolute;left:1047px;top:291px;font-size:13px;line-height:15px;height:15px;color:#666666;font-weight:400;white-space:nowrap;letter-spacing:-0.25px;">25.00 fps</div>
<div style="position:absolute;left:704px;top:314px;font-size:13.2px;line-height:15px;height:15px;color:#666666;font-weight:700;white-space:nowrap;letter-spacing:-0.1px;">Resolution</div>
<div style="position:absolute;left:809px;top:314px;font-size:13px;line-height:15px;height:15px;color:#666666;font-weight:400;white-space:nowrap;letter-spacing:-0.25px;">1920x1080 (1.78:1)</div>
<div style="position:absolute;left:948px;top:314px;font-size:13.2px;line-height:15px;height:15px;color:#666666;font-weight:700;white-space:nowrap;letter-spacing:-0.1px;">Video bitrate</div>
<div style="position:absolute;left:1047px;top:314px;font-size:13px;line-height:15px;height:15px;color:#666666;font-weight:400;white-space:nowrap;letter-spacing:-0.25px;">1012 kbps</div>
<div style="position:absolute;left:625px;top:348px;font-size:13.2px;line-height:15px;height:15px;color:#666666;font-weight:700;white-space:nowrap;letter-spacing:-0.1px;">Audio</div>
<div style="position:absolute;left:704px;top:371px;width:688px;height:1px;background:#c2c2c2;"></div>
<div style="position:absolute;left:763px;top:347px;width:1px;height:24px;background:#c8c8c8;"></div>
<div style="position:absolute;left:810px;top:347px;width:1px;height:24px;background:#c8c8c8;"></div>
<div style="position:absolute;left:874px;top:347px;width:1px;height:24px;background:#c8c8c8;"></div>
<div style="position:absolute;left:940px;top:347px;width:1px;height:24px;background:#c8c8c8;"></div>
<div style="position:absolute;left:1002px;top:347px;width:1px;height:24px;background:#c8c8c8;"></div>
<div style="position:absolute;left:1069px;top:347px;width:1px;height:24px;background:#c8c8c8;"></div>
<div style="position:absolute;left:1374px;top:347px;width:1px;height:24px;background:#c8c8c8;"></div>
<div style="position:absolute;left:705px;top:352px;font-size:13px;line-height:15px;height:15px;color:#666666;font-weight:400;white-space:nowrap;letter-spacing:-0.25px;width:58px;text-align:center;overflow:hidden;">Source</div>
<div style="position:absolute;left:764px;top:352px;font-size:13px;line-height:15px;height:15px;color:#666666;font-weight:400;white-space:nowrap;letter-spacing:-0.25px;width:46px;text-align:center;overflow:hidden;">Codec</div>
<div style="position:absolute;left:811px;top:352px;font-size:13px;line-height:15px;height:15px;color:#666666;font-weight:400;white-space:nowrap;letter-spacing:-0.25px;width:63px;text-align:center;overflow:hidden;">Channels</div>
<div style="position:absolute;left:875px;top:352px;font-size:13px;line-height:15px;height:15px;color:#666666;font-weight:400;white-space:nowrap;letter-spacing:-0.25px;width:65px;text-align:center;overflow:hidden;">Bit rate</div>
<div style="position:absolute;left:941px;top:352px;font-size:13px;line-height:15px;height:15px;color:#666666;font-weight:400;white-space:nowrap;letter-spacing:-0.25px;width:61px;text-align:center;overflow:hidden;">Bit depth</div>
<div style="position:absolute;left:1003px;top:352px;font-size:13px;line-height:15px;height:15px;color:#666666;font-weight:400;white-space:nowrap;letter-spacing:-0.25px;width:66px;text-align:center;overflow:hidden;">Language</div>
<div style="position:absolute;left:1076px;top:352px;font-size:13px;line-height:15px;height:15px;color:#666666;font-weight:400;white-space:nowrap;letter-spacing:-0.25px;width:298px;text-align:left;overflow:hidden;">Title</div>
<div style="position:absolute;left:709px;top:393px;width:665px;height:1px;background:#c2c2c2;"></div>
<div style="position:absolute;left:763px;top:373px;width:1px;height:21px;background:#c8c8c8;"></div>
<div style="position:absolute;left:810px;top:373px;width:1px;height:21px;background:#c8c8c8;"></div>
<div style="position:absolute;left:874px;top:373px;width:1px;height:21px;background:#c8c8c8;"></div>
<div style="position:absolute;left:940px;top:373px;width:1px;height:21px;background:#c8c8c8;"></div>
<div style="position:absolute;left:1002px;top:373px;width:1px;height:21px;background:#c8c8c8;"></div>
<div style="position:absolute;left:1069px;top:373px;width:1px;height:21px;background:#c8c8c8;"></div>
<div style="position:absolute;left:709px;top:376px;font-size:13px;line-height:15px;height:15px;color:#666666;font-weight:400;white-space:nowrap;letter-spacing:-0.25px;width:53px;text-align:left;overflow:hidden;">Internal</div>
<div style="position:absolute;left:769px;top:376px;font-size:13px;line-height:15px;height:15px;color:#666666;font-weight:400;white-space:nowrap;letter-spacing:-0.25px;width:41px;text-align:left;overflow:hidden;">AC3</div>
<div style="position:absolute;left:816px;top:376px;font-size:13px;line-height:15px;height:15px;color:#666666;font-weight:400;white-space:nowrap;letter-spacing:-0.25px;width:58px;text-align:left;overflow:hidden;">6ch</div>
<div style="position:absolute;left:880px;top:376px;font-size:13px;line-height:15px;height:15px;color:#666666;font-weight:400;white-space:nowrap;letter-spacing:-0.25px;width:60px;text-align:left;overflow:hidden;">384 kbps</div>
<div style="position:absolute;left:946px;top:376px;font-size:13px;line-height:15px;height:15px;color:#666666;font-weight:400;white-space:nowrap;letter-spacing:-0.25px;width:56px;text-align:left;overflow:hidden;">6 bit</div>
<div style="position:absolute;left:1008px;top:376px;font-size:13px;line-height:15px;height:15px;color:#666666;font-weight:400;white-space:nowrap;letter-spacing:-0.25px;width:61px;text-align:left;overflow:hidden;">eng</div>
<div style="position:absolute;left:709px;top:415px;width:665px;height:1px;background:#c2c2c2;"></div>
<div style="position:absolute;left:763px;top:395px;width:1px;height:21px;background:#c8c8c8;"></div>
<div style="position:absolute;left:810px;top:395px;width:1px;height:21px;background:#c8c8c8;"></div>
<div style="position:absolute;left:874px;top:395px;width:1px;height:21px;background:#c8c8c8;"></div>
<div style="position:absolute;left:940px;top:395px;width:1px;height:21px;background:#c8c8c8;"></div>
<div style="position:absolute;left:1002px;top:395px;width:1px;height:21px;background:#c8c8c8;"></div>
<div style="position:absolute;left:1069px;top:395px;width:1px;height:21px;background:#c8c8c8;"></div>
<div style="position:absolute;left:709px;top:398px;font-size:13px;line-height:15px;height:15px;color:#666666;font-weight:400;white-space:nowrap;letter-spacing:-0.25px;width:53px;text-align:left;overflow:hidden;">Internal</div>
<div style="position:absolute;left:769px;top:398px;font-size:13px;line-height:15px;height:15px;color:#666666;font-weight:400;white-space:nowrap;letter-spacing:-0.25px;width:41px;text-align:left;overflow:hidden;">MP3</div>
<div style="position:absolute;left:816px;top:398px;font-size:13px;line-height:15px;height:15px;color:#666666;font-weight:400;white-space:nowrap;letter-spacing:-0.25px;width:58px;text-align:left;overflow:hidden;">2ch</div>
<div style="position:absolute;left:880px;top:398px;font-size:13px;line-height:15px;height:15px;color:#666666;font-weight:400;white-space:nowrap;letter-spacing:-0.25px;width:60px;text-align:left;overflow:hidden;">128 kbps</div>
<div style="position:absolute;left:946px;top:398px;font-size:13px;line-height:15px;height:15px;color:#666666;font-weight:400;white-space:nowrap;letter-spacing:-0.25px;width:56px;text-align:left;overflow:hidden;">6 bit</div>
<div style="position:absolute;left:1008px;top:398px;font-size:13px;line-height:15px;height:15px;color:#666666;font-weight:400;white-space:nowrap;letter-spacing:-0.25px;width:61px;text-align:left;overflow:hidden;">deu</div>
<div style="position:absolute;left:709px;top:437px;width:665px;height:1px;background:#c2c2c2;"></div>
<div style="position:absolute;left:763px;top:417px;width:1px;height:21px;background:#c8c8c8;"></div>
<div style="position:absolute;left:810px;top:417px;width:1px;height:21px;background:#c8c8c8;"></div>
<div style="position:absolute;left:874px;top:417px;width:1px;height:21px;background:#c8c8c8;"></div>
<div style="position:absolute;left:940px;top:417px;width:1px;height:21px;background:#c8c8c8;"></div>
<div style="position:absolute;left:1002px;top:417px;width:1px;height:21px;background:#c8c8c8;"></div>
<div style="position:absolute;left:1069px;top:417px;width:1px;height:21px;background:#c8c8c8;"></div>
<div style="position:absolute;left:763px;top:439px;width:1px;height:10px;background:#c8c8c8;"></div>
<div style="position:absolute;left:810px;top:439px;width:1px;height:10px;background:#c8c8c8;"></div>
<div style="position:absolute;left:874px;top:439px;width:1px;height:10px;background:#c8c8c8;"></div>
<div style="position:absolute;left:940px;top:439px;width:1px;height:10px;background:#c8c8c8;"></div>
<div style="position:absolute;left:1002px;top:439px;width:1px;height:10px;background:#c8c8c8;"></div>
<div style="position:absolute;left:1069px;top:439px;width:1px;height:10px;background:#c8c8c8;"></div>
<div style="position:absolute;left:1374px;top:347px;width:1px;height:102px;background:#c8c8c8;"></div>
<svg style="position:absolute;left:1375.5px;top:351px;" width="16" height="16" viewBox="0 0 16 16"><path d="M10.9 1.6 C8.6 1.2 6.9 3.4 7.7 5.6 L1.7 11.6 C0.9 12.4 0.9 13.5 1.6 14.2 C2.3 14.9 3.4 14.9 4.2 14.1 L10.2 8.1 C12.4 8.9 14.6 7.2 14.2 4.9 L12.2 6.9 L9.9 5.9 L8.9 3.6 Z" fill="none" stroke="#666666" stroke-width="1.25" stroke-linejoin="round"/><circle cx="2.9" cy="12.9" r="0.5" fill="#666666"/></svg>
<div style="position:absolute;left:1379px;top:376px;width:8px;height:69px;background:#fff;border-radius:4px"></div>
<div style="position:absolute;left:1380px;top:377px;width:6px;height:42px;background:#848484;border-radius:3px"></div>
<div style="position:absolute;left:625px;top:467px;font-size:13.2px;line-height:15px;height:15px;color:#666666;font-weight:700;white-space:nowrap;letter-spacing:-0.1px;">Subtitles</div>
<div style="position:absolute;left:704px;top:490px;width:688px;height:1px;background:#c2c2c2;"></div>
<div style="position:absolute;left:763px;top:467px;width:1px;height:23px;background:#c8c8c8;"></div>
<div style="position:absolute;left:830px;top:467px;width:1px;height:23px;background:#c8c8c8;"></div>
<div style="position:absolute;left:880px;top:467px;width:1px;height:23px;background:#c8c8c8;"></div>
<div style="position:absolute;left:982px;top:467px;width:1px;height:23px;background:#c8c8c8;"></div>
<div style="position:absolute;left:1034px;top:467px;width:1px;height:23px;background:#c8c8c8;"></div>
<div style="position:absolute;left:1374px;top:467px;width:1px;height:23px;background:#c8c8c8;"></div>
<div style="position:absolute;left:705px;top:471px;font-size:13px;line-height:15px;height:15px;color:#666666;font-weight:400;white-space:nowrap;letter-spacing:-0.25px;width:58px;text-align:center;overflow:hidden;">Source</div>
<div style="position:absolute;left:764px;top:471px;font-size:13px;line-height:15px;height:15px;color:#666666;font-weight:400;white-space:nowrap;letter-spacing:-0.25px;width:66px;text-align:center;overflow:hidden;">Language</div>
<div style="position:absolute;left:831px;top:471px;font-size:13px;line-height:15px;height:15px;color:#666666;font-weight:400;white-space:nowrap;letter-spacing:-0.25px;width:49px;text-align:center;overflow:hidden;">Forced</div>
<div style="position:absolute;left:881px;top:471px;font-size:13px;line-height:15px;height:15px;color:#666666;font-weight:400;white-space:nowrap;letter-spacing:-0.25px;width:101px;text-align:center;overflow:hidden;">Hard of Hearing</div>
<div style="position:absolute;left:983px;top:471px;font-size:13px;line-height:15px;height:15px;color:#666666;font-weight:400;white-space:nowrap;letter-spacing:-0.25px;width:51px;text-align:center;overflow:hidden;">Format</div>
<div style="position:absolute;left:1041px;top:471px;font-size:13px;line-height:15px;height:15px;color:#666666;font-weight:400;white-space:nowrap;letter-spacing:-0.25px;width:333px;text-align:left;overflow:hidden;">Title</div>
<div style="position:absolute;left:709px;top:512px;width:665px;height:1px;background:#c2c2c2;"></div>
<div style="position:absolute;left:763px;top:492px;width:1px;height:21px;background:#c8c8c8;"></div>
<div style="position:absolute;left:830px;top:492px;width:1px;height:21px;background:#c8c8c8;"></div>
<div style="position:absolute;left:880px;top:492px;width:1px;height:21px;background:#c8c8c8;"></div>
<div style="position:absolute;left:982px;top:492px;width:1px;height:21px;background:#c8c8c8;"></div>
<div style="position:absolute;left:1034px;top:492px;width:1px;height:21px;background:#c8c8c8;"></div>
<div style="position:absolute;left:709px;top:495px;font-size:13px;line-height:15px;height:15px;color:#666666;font-weight:400;white-space:nowrap;letter-spacing:-0.25px;width:53px;text-align:left;overflow:hidden;">Internal</div>
<div style="position:absolute;left:769px;top:495px;font-size:13px;line-height:15px;height:15px;color:#666666;font-weight:400;white-space:nowrap;letter-spacing:-0.25px;width:61px;text-align:left;overflow:hidden;">eng</div>
<div style="position:absolute;left:850.0px;top:494.5px;width:14px;height:14px;box-sizing:border-box;border:1px solid #bdbdbd;border-radius:2.5px;background:#fff"></div>
<div style="position:absolute;left:926.0px;top:494.5px;width:14px;height:14px;box-sizing:border-box;border:1px solid #bdbdbd;border-radius:2.5px;background:#fff"></div>
<div style="position:absolute;left:709px;top:534px;width:665px;height:1px;background:#c2c2c2;"></div>
<div style="position:absolute;left:763px;top:514px;width:1px;height:21px;background:#c8c8c8;"></div>
<div style="position:absolute;left:830px;top:514px;width:1px;height:21px;background:#c8c8c8;"></div>
<div style="position:absolute;left:880px;top:514px;width:1px;height:21px;background:#c8c8c8;"></div>
<div style="position:absolute;left:982px;top:514px;width:1px;height:21px;background:#c8c8c8;"></div>
<div style="position:absolute;left:1034px;top:514px;width:1px;height:21px;background:#c8c8c8;"></div>
<div style="position:absolute;left:709px;top:517px;font-size:13px;line-height:15px;height:15px;color:#666666;font-weight:400;white-space:nowrap;letter-spacing:-0.25px;width:53px;text-align:left;overflow:hidden;">Internal</div>
<div style="position:absolute;left:769px;top:517px;font-size:13px;line-height:15px;height:15px;color:#666666;font-weight:400;white-space:nowrap;letter-spacing:-0.25px;width:61px;text-align:left;overflow:hidden;">deu</div>
<div style="position:absolute;left:850.0px;top:516.5px;width:14px;height:14px;box-sizing:border-box;border:1px solid #bdbdbd;border-radius:2.5px;background:#fff"></div>
<div style="position:absolute;left:926.0px;top:516.5px;width:14px;height:14px;box-sizing:border-box;border:1px solid #bdbdbd;border-radius:2.5px;background:#fff"></div>
<div style="position:absolute;left:709px;top:556px;width:665px;height:1px;background:#c2c2c2;"></div>
<div style="position:absolute;left:763px;top:536px;width:1px;height:21px;background:#c8c8c8;"></div>
<div style="position:absolute;left:830px;top:536px;width:1px;height:21px;background:#c8c8c8;"></div>
<div style="position:absolute;left:880px;top:536px;width:1px;height:21px;background:#c8c8c8;"></div>
<div style="position:absolute;left:982px;top:536px;width:1px;height:21px;background:#c8c8c8;"></div>
<div style="position:absolute;left:1034px;top:536px;width:1px;height:21px;background:#c8c8c8;"></div>
<div style="position:absolute;left:763px;top:558px;width:1px;height:10px;background:#c8c8c8;"></div>
<div style="position:absolute;left:830px;top:558px;width:1px;height:10px;background:#c8c8c8;"></div>
<div style="position:absolute;left:880px;top:558px;width:1px;height:10px;background:#c8c8c8;"></div>
<div style="position:absolute;left:982px;top:558px;width:1px;height:10px;background:#c8c8c8;"></div>
<div style="position:absolute;left:1034px;top:558px;width:1px;height:10px;background:#c8c8c8;"></div>
<div style="position:absolute;left:1374px;top:467px;width:1px;height:101px;background:#c8c8c8;"></div>
<svg style="position:absolute;left:1375.5px;top:470px;" width="16" height="16" viewBox="0 0 16 16"><path d="M10.9 1.6 C8.6 1.2 6.9 3.4 7.7 5.6 L1.7 11.6 C0.9 12.4 0.9 13.5 1.6 14.2 C2.3 14.9 3.4 14.9 4.2 14.1 L10.2 8.1 C12.4 8.9 14.6 7.2 14.2 4.9 L12.2 6.9 L9.9 5.9 L8.9 3.6 Z" fill="none" stroke="#666666" stroke-width="1.25" stroke-linejoin="round"/><circle cx="2.9" cy="12.9" r="0.5" fill="#666666"/></svg>
<div style="position:absolute;left:1379px;top:495px;width:8px;height:69px;background:#fff;border-radius:4px"></div>
<div style="position:absolute;left:1380px;top:496px;width:6px;height:42px;background:#848484;border-radius:3px"></div>
<div style="position:absolute;left:625px;top:575px;width:767px;height:1px;background:#cfcfcf;"></div>
<div style="position:absolute;left:625px;top:584px;font-size:13.2px;line-height:15px;height:15px;color:#666666;font-weight:700;white-space:nowrap;letter-spacing:-0.1px;">Media files</div>
<div style="position:absolute;left:625px;top:630px;width:767px;height:1px;background:#c2c2c2;"></div>
<div style="position:absolute;left:654px;top:607px;width:1px;height:23px;background:#c8c8c8;"></div>
<div style="position:absolute;left:817px;top:607px;width:1px;height:23px;background:#c8c8c8;"></div>
<div style="position:absolute;left:887px;top:607px;width:1px;height:23px;background:#c8c8c8;"></div>
<div style="position:absolute;left:950px;top:607px;width:1px;height:23px;background:#c8c8c8;"></div>
<div style="position:absolute;left:1029px;top:607px;width:1px;height:23px;background:#c8c8c8;"></div>
<div style="position:absolute;left:1109px;top:607px;width:1px;height:23px;background:#c8c8c8;"></div>
<div style="position:absolute;left:1187px;top:607px;width:1px;height:23px;background:#c8c8c8;"></div>
<div style="position:absolute;left:1268px;top:607px;width:1px;height:23px;background:#c8c8c8;"></div>
<div style="position:absolute;left:1332px;top:607px;width:1px;height:23px;background:#c8c8c8;"></div>
<div style="position:absolute;left:1374px;top:607px;width:1px;height:23px;background:#c8c8c8;"></div>
<div style="position:absolute;left:626px;top:611px;font-size:13px;line-height:15px;height:15px;color:#666666;font-weight:400;white-space:nowrap;letter-spacing:-0.25px;width:28px;text-align:center;overflow:hidden;"></div>
<div style="position:absolute;left:655px;top:611px;font-size:13px;line-height:15px;height:15px;color:#666666;font-weight:400;white-space:nowrap;letter-spacing:-0.25px;width:162px;text-align:center;overflow:hidden;">Filename</div>
<div style="position:absolute;left:818px;top:611px;font-size:13px;line-height:15px;height:15px;color:#666666;font-weight:400;white-space:nowrap;letter-spacing:-0.25px;width:69px;text-align:center;overflow:hidden;">Type</div>
<div style="position:absolute;left:888px;top:611px;font-size:13px;line-height:15px;height:15px;color:#666666;font-weight:400;white-space:nowrap;letter-spacing:-0.25px;width:62px;text-align:center;overflow:hidden;">Size</div>
<div style="position:absolute;left:951px;top:611px;font-size:13px;line-height:15px;height:15px;color:#666666;font-weight:400;white-space:nowrap;letter-spacing:-0.25px;width:78px;text-align:center;overflow:hidden;">Video codec</div>
<div style="position:absolute;left:1030px;top:611px;font-size:13px;line-height:15px;height:15px;color:#666666;font-weight:400;white-space:nowrap;letter-spacing:-0.25px;width:79px;text-align:center;overflow:hidden;">Audio codec</div>
<div style="position:absolute;left:1110px;top:611px;font-size:13px;line-height:15px;height:15px;color:#666666;font-weight:400;white-space:nowrap;letter-spacing:-0.25px;width:77px;text-align:center;overflow:hidden;">Resolution</div>
<div style="position:absolute;left:1188px;top:611px;font-size:13px;line-height:15px;height:15px;color:#666666;font-weight:400;white-space:nowrap;letter-spacing:-0.25px;width:80px;text-align:center;overflow:hidden;">Runtime</div>
<div style="position:absolute;left:1269px;top:611px;font-size:13px;line-height:15px;height:15px;color:#666666;font-weight:400;white-space:nowrap;letter-spacing:-0.25px;width:63px;text-align:center;overflow:hidden;">Subtitle</div>
<div style="position:absolute;left:1333px;top:611px;font-size:13px;line-height:15px;height:15px;color:#666666;font-weight:400;white-space:nowrap;letter-spacing:-0.25px;width:41px;text-align:center;overflow:hidden;"><span style="display:block;text-align:left;padding-left:10px">File created</span></div>
<div style="position:absolute;left:630px;top:652px;width:744px;height:1px;background:#c2c2c2;"></div>
<div style="position:absolute;left:654px;top:632px;width:1px;height:21px;background:#c8c8c8;"></div>
<div style="position:absolute;left:817px;top:632px;width:1px;height:21px;background:#c8c8c8;"></div>
<div style="position:absolute;left:887px;top:632px;width:1px;height:21px;background:#c8c8c8;"></div>
<div style="position:absolute;left:950px;top:632px;width:1px;height:21px;background:#c8c8c8;"></div>
<div style="position:absolute;left:1029px;top:632px;width:1px;height:21px;background:#c8c8c8;"></div>
<div style="position:absolute;left:1109px;top:632px;width:1px;height:21px;background:#c8c8c8;"></div>
<div style="position:absolute;left:1187px;top:632px;width:1px;height:21px;background:#c8c8c8;"></div>
<div style="position:absolute;left:1268px;top:632px;width:1px;height:21px;background:#c8c8c8;"></div>
<div style="position:absolute;left:1332px;top:632px;width:1px;height:21px;background:#c8c8c8;"></div>
<svg style="position:absolute;left:630.5px;top:633.3px;" width="18" height="18" viewBox="0 0 18 18"><path d="M4.6 3.6 L14.4 9.2 L4.6 14.8 Z" fill="none" stroke="#4a8af4" stroke-width="1.3" stroke-linejoin="round"/></svg>
<div style="position:absolute;left:660px;top:635px;font-size:13px;line-height:15px;height:15px;color:#666666;font-weight:400;white-space:nowrap;letter-spacing:-0.25px;width:157px;text-align:left;overflow:hidden;">Aladdin (1992).mkv</div>
<div style="position:absolute;left:823px;top:635px;font-size:13px;line-height:15px;height:15px;color:#666666;font-weight:400;white-space:nowrap;letter-spacing:-0.25px;width:64px;text-align:left;overflow:hidden;">Video</div>
<div style="position:absolute;left:888px;top:635px;font-size:13px;line-height:15px;height:15px;color:#666666;font-weight:400;white-space:nowrap;letter-spacing:-0.25px;width:58px;text-align:right;overflow:hidden;">0 B</div>
<div style="position:absolute;left:956px;top:635px;font-size:13px;line-height:15px;height:15px;color:#666666;font-weight:400;white-space:nowrap;letter-spacing:-0.25px;width:73px;text-align:left;overflow:hidden;">h264</div>
<div style="position:absolute;left:1035px;top:635px;font-size:13px;line-height:15px;height:15px;color:#666666;font-weight:400;white-space:nowrap;letter-spacing:-0.25px;width:74px;text-align:left;overflow:hidden;">AC3 / MP3</div>
<div style="position:absolute;left:1115px;top:635px;font-size:13px;line-height:15px;height:15px;color:#666666;font-weight:400;white-space:nowrap;letter-spacing:-0.25px;width:72px;text-align:left;overflow:hidden;">1920x1080</div>
<div style="position:absolute;left:1193px;top:635px;font-size:13px;line-height:15px;height:15px;color:#666666;font-weight:400;white-space:nowrap;letter-spacing:-0.25px;width:75px;text-align:left;overflow:hidden;">1h 30m 00s</div>
<div style="position:absolute;left:1274px;top:635px;font-size:13px;line-height:15px;height:15px;color:#666666;font-weight:400;white-space:nowrap;letter-spacing:-0.25px;width:58px;text-align:left;overflow:hidden;">eng, deu</div>
<div style="position:absolute;left:1338px;top:635px;font-size:13px;line-height:15px;height:15px;color:#666666;font-weight:400;white-space:nowrap;letter-spacing:-0.25px;width:36px;text-align:left;overflow:hidden;">06.01.2</div>
<div style="position:absolute;left:630px;top:674px;width:744px;height:1px;background:#c2c2c2;"></div>
<div style="position:absolute;left:654px;top:654px;width:1px;height:21px;background:#c8c8c8;"></div>
<div style="position:absolute;left:817px;top:654px;width:1px;height:21px;background:#c8c8c8;"></div>
<div style="position:absolute;left:887px;top:654px;width:1px;height:21px;background:#c8c8c8;"></div>
<div style="position:absolute;left:950px;top:654px;width:1px;height:21px;background:#c8c8c8;"></div>
<div style="position:absolute;left:1029px;top:654px;width:1px;height:21px;background:#c8c8c8;"></div>
<div style="position:absolute;left:1109px;top:654px;width:1px;height:21px;background:#c8c8c8;"></div>
<div style="position:absolute;left:1187px;top:654px;width:1px;height:21px;background:#c8c8c8;"></div>
<div style="position:absolute;left:1268px;top:654px;width:1px;height:21px;background:#c8c8c8;"></div>
<div style="position:absolute;left:1332px;top:654px;width:1px;height:21px;background:#c8c8c8;"></div>
<svg style="position:absolute;left:630.5px;top:655.3px;" width="18" height="18" viewBox="0 0 18 18"><path d="M4.6 3.6 L14.4 9.2 L4.6 14.8 Z" fill="none" stroke="#4a8af4" stroke-width="1.3" stroke-linejoin="round"/></svg>
<div style="position:absolute;left:660px;top:657px;font-size:13px;line-height:15px;height:15px;color:#666666;font-weight:400;white-space:nowrap;letter-spacing:-0.25px;width:157px;text-align:left;overflow:hidden;">Aladdin (1992)-trailer.mp4</div>
<div style="position:absolute;left:823px;top:657px;font-size:13px;line-height:15px;height:15px;color:#666666;font-weight:400;white-space:nowrap;letter-spacing:-0.25px;width:64px;text-align:left;overflow:hidden;">Trailer</div>
<div style="position:absolute;left:888px;top:657px;font-size:13px;line-height:15px;height:15px;color:#666666;font-weight:400;white-space:nowrap;letter-spacing:-0.25px;width:58px;text-align:right;overflow:hidden;">13.43 M</div>
<div style="position:absolute;left:956px;top:657px;font-size:13px;line-height:15px;height:15px;color:#666666;font-weight:400;white-space:nowrap;letter-spacing:-0.25px;width:73px;text-align:left;overflow:hidden;">h264</div>
<div style="position:absolute;left:1035px;top:657px;font-size:13px;line-height:15px;height:15px;color:#666666;font-weight:400;white-space:nowrap;letter-spacing:-0.25px;width:74px;text-align:left;overflow:hidden;">AAC</div>
<div style="position:absolute;left:1115px;top:657px;font-size:13px;line-height:15px;height:15px;color:#666666;font-weight:400;white-space:nowrap;letter-spacing:-0.25px;width:72px;text-align:left;overflow:hidden;">1280x720</div>
<div style="position:absolute;left:1193px;top:657px;font-size:13px;line-height:15px;height:15px;color:#666666;font-weight:400;white-space:nowrap;letter-spacing:-0.25px;width:75px;text-align:left;overflow:hidden;">0h 01m 19s</div>
<div style="position:absolute;left:1338px;top:657px;font-size:13px;line-height:15px;height:15px;color:#666666;font-weight:400;white-space:nowrap;letter-spacing:-0.25px;width:36px;text-align:left;overflow:hidden;">06.01.2</div>
<div style="position:absolute;left:630px;top:696px;width:744px;height:1px;background:#c2c2c2;"></div>
<div style="position:absolute;left:654px;top:676px;width:1px;height:21px;background:#c8c8c8;"></div>
<div style="position:absolute;left:817px;top:676px;width:1px;height:21px;background:#c8c8c8;"></div>
<div style="position:absolute;left:887px;top:676px;width:1px;height:21px;background:#c8c8c8;"></div>
<div style="position:absolute;left:950px;top:676px;width:1px;height:21px;background:#c8c8c8;"></div>
<div style="position:absolute;left:1029px;top:676px;width:1px;height:21px;background:#c8c8c8;"></div>
<div style="position:absolute;left:1109px;top:676px;width:1px;height:21px;background:#c8c8c8;"></div>
<div style="position:absolute;left:1187px;top:676px;width:1px;height:21px;background:#c8c8c8;"></div>
<div style="position:absolute;left:1268px;top:676px;width:1px;height:21px;background:#c8c8c8;"></div>
<div style="position:absolute;left:1332px;top:676px;width:1px;height:21px;background:#c8c8c8;"></div>
<svg style="position:absolute;left:631.5px;top:676.5px;" width="16" height="18" viewBox="0 0 16 18"><path d="M3.4 2.6 H9.2 L12.2 5.6 V14.6 C12.2 15.3 11.8 15.7 11.1 15.7 H3.4 C2.7 15.7 2.3 15.3 2.3 14.6 V3.7 C2.3 3 2.7 2.6 3.4 2.6 Z" fill="none" stroke="#4a8af4" stroke-width="1.3" stroke-linejoin="round"/><path d="M9 2.6 V5.8 H12.2" fill="none" stroke="#4a8af4" stroke-width="1.1"/><path d="M4.7 8.2 H9.8 M4.7 10.6 H9.8 M4.7 13 H9.8" stroke="#4a8af4" stroke-width="1.1"/></svg>
<div style="position:absolute;left:660px;top:679px;font-size:13px;line-height:15px;height:15px;color:#666666;font-weight:400;white-space:nowrap;letter-spacing:-0.25px;width:157px;text-align:left;overflow:hidden;">Aladdin (1992).nfo</div>
<div style="position:absolute;left:823px;top:679px;font-size:13px;line-height:15px;height:15px;color:#666666;font-weight:400;white-space:nowrap;letter-spacing:-0.25px;width:64px;text-align:left;overflow:hidden;">NFO</div>
<div style="position:absolute;left:888px;top:679px;font-size:13px;line-height:15px;height:15px;color:#666666;font-weight:400;white-space:nowrap;letter-spacing:-0.25px;width:58px;text-align:right;overflow:hidden;">10.84 k</div>
<div style="position:absolute;left:1338px;top:679px;font-size:13px;line-height:15px;height:15px;color:#666666;font-weight:400;white-space:nowrap;letter-spacing:-0.25px;width:36px;text-align:left;overflow:hidden;">07.01.2</div>
<div style="position:absolute;left:630px;top:718px;width:744px;height:1px;background:#c2c2c2;"></div>
<div style="position:absolute;left:654px;top:698px;width:1px;height:21px;background:#c8c8c8;"></div>
<div style="position:absolute;left:817px;top:698px;width:1px;height:21px;background:#c8c8c8;"></div>
<div style="position:absolute;left:887px;top:698px;width:1px;height:21px;background:#c8c8c8;"></div>
<div style="position:absolute;left:950px;top:698px;width:1px;height:21px;background:#c8c8c8;"></div>
<div style="position:absolute;left:1029px;top:698px;width:1px;height:21px;background:#c8c8c8;"></div>
<div style="position:absolute;left:1109px;top:698px;width:1px;height:21px;background:#c8c8c8;"></div>
<div style="position:absolute;left:1187px;top:698px;width:1px;height:21px;background:#c8c8c8;"></div>
<div style="position:absolute;left:1268px;top:698px;width:1px;height:21px;background:#c8c8c8;"></div>
<div style="position:absolute;left:1332px;top:698px;width:1px;height:21px;background:#c8c8c8;"></div>
<svg style="position:absolute;left:630.5px;top:698.5px;" width="18" height="18" viewBox="0 0 18 18"><circle cx="7.6" cy="7.4" r="4.7" fill="none" stroke="#4a8af4" stroke-width="1.3"/><path d="M11 10.9 L15.6 15.6" stroke="#4a8af4" stroke-width="1.5" stroke-linecap="round"/></svg>
<div style="position:absolute;left:660px;top:701px;font-size:13px;line-height:15px;height:15px;color:#666666;font-weight:400;white-space:nowrap;letter-spacing:-0.25px;width:157px;text-align:left;overflow:hidden;">poster.jpg</div>
<div style="position:absolute;left:823px;top:701px;font-size:13px;line-height:15px;height:15px;color:#666666;font-weight:400;white-space:nowrap;letter-spacing:-0.25px;width:64px;text-align:left;overflow:hidden;">Poster</div>
<div style="position:absolute;left:888px;top:701px;font-size:13px;line-height:15px;height:15px;color:#666666;font-weight:400;white-space:nowrap;letter-spacing:-0.25px;width:58px;text-align:right;overflow:hidden;">104.68 k</div>
<div style="position:absolute;left:956px;top:701px;font-size:13px;line-height:15px;height:15px;color:#666666;font-weight:400;white-space:nowrap;letter-spacing:-0.25px;width:73px;text-align:left;overflow:hidden;">JPEG</div>
<div style="position:absolute;left:1115px;top:701px;font-size:13px;line-height:15px;height:15px;color:#666666;font-weight:400;white-space:nowrap;letter-spacing:-0.25px;width:72px;text-align:left;overflow:hidden;">500x750</div>
<div style="position:absolute;left:1338px;top:701px;font-size:13px;line-height:15px;height:15px;color:#666666;font-weight:400;white-space:nowrap;letter-spacing:-0.25px;width:36px;text-align:left;overflow:hidden;">06.01.2</div>
<div style="position:absolute;left:630px;top:740px;width:744px;height:1px;background:#c2c2c2;"></div>
<div style="position:absolute;left:654px;top:720px;width:1px;height:21px;background:#c8c8c8;"></div>
<div style="position:absolute;left:817px;top:720px;width:1px;height:21px;background:#c8c8c8;"></div>
<div style="position:absolute;left:887px;top:720px;width:1px;height:21px;background:#c8c8c8;"></div>
<div style="position:absolute;left:950px;top:720px;width:1px;height:21px;background:#c8c8c8;"></div>
<div style="position:absolute;left:1029px;top:720px;width:1px;height:21px;background:#c8c8c8;"></div>
<div style="position:absolute;left:1109px;top:720px;width:1px;height:21px;background:#c8c8c8;"></div>
<div style="position:absolute;left:1187px;top:720px;width:1px;height:21px;background:#c8c8c8;"></div>
<div style="position:absolute;left:1268px;top:720px;width:1px;height:21px;background:#c8c8c8;"></div>
<div style="position:absolute;left:1332px;top:720px;width:1px;height:21px;background:#c8c8c8;"></div>
<svg style="position:absolute;left:630.5px;top:720.5px;" width="18" height="18" viewBox="0 0 18 18"><circle cx="7.6" cy="7.4" r="4.7" fill="none" stroke="#4a8af4" stroke-width="1.3"/><path d="M11 10.9 L15.6 15.6" stroke="#4a8af4" stroke-width="1.5" stroke-linecap="round"/></svg>
<div style="position:absolute;left:660px;top:723px;font-size:13px;line-height:15px;height:15px;color:#666666;font-weight:400;white-space:nowrap;letter-spacing:-0.25px;width:157px;text-align:left;overflow:hidden;">fanart.jpg</div>
<div style="position:absolute;left:823px;top:723px;font-size:13px;line-height:15px;height:15px;color:#666666;font-weight:400;white-space:nowrap;letter-spacing:-0.25px;width:64px;text-align:left;overflow:hidden;">Fanart</div>
<div style="position:absolute;left:888px;top:723px;font-size:13px;line-height:15px;height:15px;color:#666666;font-weight:400;white-space:nowrap;letter-spacing:-0.25px;width:58px;text-align:right;overflow:hidden;">815.33 k</div>
<div style="position:absolute;left:956px;top:723px;font-size:13px;line-height:15px;height:15px;color:#666666;font-weight:400;white-space:nowrap;letter-spacing:-0.25px;width:73px;text-align:left;overflow:hidden;">JPEG</div>
<div style="position:absolute;left:1115px;top:723px;font-size:13px;line-height:15px;height:15px;color:#666666;font-weight:400;white-space:nowrap;letter-spacing:-0.25px;width:72px;text-align:left;overflow:hidden;">1920x1080</div>
<div style="position:absolute;left:1338px;top:723px;font-size:13px;line-height:15px;height:15px;color:#666666;font-weight:400;white-space:nowrap;letter-spacing:-0.25px;width:36px;text-align:left;overflow:hidden;">06.01.2</div>
<div style="position:absolute;left:630px;top:762px;width:744px;height:1px;background:#c2c2c2;"></div>
<div style="position:absolute;left:654px;top:742px;width:1px;height:21px;background:#c8c8c8;"></div>
<div style="position:absolute;left:817px;top:742px;width:1px;height:21px;background:#c8c8c8;"></div>
<div style="position:absolute;left:887px;top:742px;width:1px;height:21px;background:#c8c8c8;"></div>
<div style="position:absolute;left:950px;top:742px;width:1px;height:21px;background:#c8c8c8;"></div>
<div style="position:absolute;left:1029px;top:742px;width:1px;height:21px;background:#c8c8c8;"></div>
<div style="position:absolute;left:1109px;top:742px;width:1px;height:21px;background:#c8c8c8;"></div>
<div style="position:absolute;left:1187px;top:742px;width:1px;height:21px;background:#c8c8c8;"></div>
<div style="position:absolute;left:1268px;top:742px;width:1px;height:21px;background:#c8c8c8;"></div>
<div style="position:absolute;left:1332px;top:742px;width:1px;height:21px;background:#c8c8c8;"></div>
<svg style="position:absolute;left:630.5px;top:742.5px;" width="18" height="18" viewBox="0 0 18 18"><circle cx="7.6" cy="7.4" r="4.7" fill="none" stroke="#4a8af4" stroke-width="1.3"/><path d="M11 10.9 L15.6 15.6" stroke="#4a8af4" stroke-width="1.5" stroke-linecap="round"/></svg>
<div style="position:absolute;left:660px;top:745px;font-size:13px;line-height:15px;height:15px;color:#666666;font-weight:400;white-space:nowrap;letter-spacing:-0.25px;width:157px;text-align:left;overflow:hidden;">banner.jpg</div>
<div style="position:absolute;left:823px;top:745px;font-size:13px;line-height:15px;height:15px;color:#666666;font-weight:400;white-space:nowrap;letter-spacing:-0.25px;width:64px;text-align:left;overflow:hidden;">Banner</div>
<div style="position:absolute;left:888px;top:745px;font-size:13px;line-height:15px;height:15px;color:#666666;font-weight:400;white-space:nowrap;letter-spacing:-0.25px;width:58px;text-align:right;overflow:hidden;">165.53 k</div>
<div style="position:absolute;left:956px;top:745px;font-size:13px;line-height:15px;height:15px;color:#666666;font-weight:400;white-space:nowrap;letter-spacing:-0.25px;width:73px;text-align:left;overflow:hidden;">JPEG</div>
<div style="position:absolute;left:1115px;top:745px;font-size:13px;line-height:15px;height:15px;color:#666666;font-weight:400;white-space:nowrap;letter-spacing:-0.25px;width:72px;text-align:left;overflow:hidden;">1000x185</div>
<div style="position:absolute;left:1338px;top:745px;font-size:13px;line-height:15px;height:15px;color:#666666;font-weight:400;white-space:nowrap;letter-spacing:-0.25px;width:36px;text-align:left;overflow:hidden;">06.01.2</div>
<div style="position:absolute;left:630px;top:784px;width:744px;height:1px;background:#c2c2c2;"></div>
<div style="position:absolute;left:654px;top:764px;width:1px;height:21px;background:#c8c8c8;"></div>
<div style="position:absolute;left:817px;top:764px;width:1px;height:21px;background:#c8c8c8;"></div>
<div style="position:absolute;left:887px;top:764px;width:1px;height:21px;background:#c8c8c8;"></div>
<div style="position:absolute;left:950px;top:764px;width:1px;height:21px;background:#c8c8c8;"></div>
<div style="position:absolute;left:1029px;top:764px;width:1px;height:21px;background:#c8c8c8;"></div>
<div style="position:absolute;left:1109px;top:764px;width:1px;height:21px;background:#c8c8c8;"></div>
<div style="position:absolute;left:1187px;top:764px;width:1px;height:21px;background:#c8c8c8;"></div>
<div style="position:absolute;left:1268px;top:764px;width:1px;height:21px;background:#c8c8c8;"></div>
<div style="position:absolute;left:1332px;top:764px;width:1px;height:21px;background:#c8c8c8;"></div>
<svg style="position:absolute;left:630.5px;top:764.5px;" width="18" height="18" viewBox="0 0 18 18"><circle cx="7.6" cy="7.4" r="4.7" fill="none" stroke="#4a8af4" stroke-width="1.3"/><path d="M11 10.9 L15.6 15.6" stroke="#4a8af4" stroke-width="1.5" stroke-linecap="round"/></svg>
<div style="position:absolute;left:660px;top:767px;font-size:13px;line-height:15px;height:15px;color:#666666;font-weight:400;white-space:nowrap;letter-spacing:-0.25px;width:157px;text-align:left;overflow:hidden;">clearart.png</div>
<div style="position:absolute;left:823px;top:767px;font-size:13px;line-height:15px;height:15px;color:#666666;font-weight:400;white-space:nowrap;letter-spacing:-0.25px;width:64px;text-align:left;overflow:hidden;">Clearart</div>
<div style="position:absolute;left:888px;top:767px;font-size:13px;line-height:15px;height:15px;color:#666666;font-weight:400;white-space:nowrap;letter-spacing:-0.25px;width:58px;text-align:right;overflow:hidden;">572.09 k</div>
<div style="position:absolute;left:956px;top:767px;font-size:13px;line-height:15px;height:15px;color:#666666;font-weight:400;white-space:nowrap;letter-spacing:-0.25px;width:73px;text-align:left;overflow:hidden;">PNG</div>
<div style="position:absolute;left:1115px;top:767px;font-size:13px;line-height:15px;height:15px;color:#666666;font-weight:400;white-space:nowrap;letter-spacing:-0.25px;width:72px;text-align:left;overflow:hidden;">1000x562</div>
<div style="position:absolute;left:1338px;top:767px;font-size:13px;line-height:15px;height:15px;color:#666666;font-weight:400;white-space:nowrap;letter-spacing:-0.25px;width:36px;text-align:left;overflow:hidden;">06.01.2</div>
<div style="position:absolute;left:630px;top:806px;width:744px;height:1px;background:#c2c2c2;"></div>
<div style="position:absolute;left:654px;top:786px;width:1px;height:21px;background:#c8c8c8;"></div>
<div style="position:absolute;left:817px;top:786px;width:1px;height:21px;background:#c8c8c8;"></div>
<div style="position:absolute;left:887px;top:786px;width:1px;height:21px;background:#c8c8c8;"></div>
<div style="position:absolute;left:950px;top:786px;width:1px;height:21px;background:#c8c8c8;"></div>
<div style="position:absolute;left:1029px;top:786px;width:1px;height:21px;background:#c8c8c8;"></div>
<div style="position:absolute;left:1109px;top:786px;width:1px;height:21px;background:#c8c8c8;"></div>
<div style="position:absolute;left:1187px;top:786px;width:1px;height:21px;background:#c8c8c8;"></div>
<div style="position:absolute;left:1268px;top:786px;width:1px;height:21px;background:#c8c8c8;"></div>
<div style="position:absolute;left:1332px;top:786px;width:1px;height:21px;background:#c8c8c8;"></div>
<svg style="position:absolute;left:630.5px;top:786.5px;" width="18" height="18" viewBox="0 0 18 18"><circle cx="7.6" cy="7.4" r="4.7" fill="none" stroke="#4a8af4" stroke-width="1.3"/><path d="M11 10.9 L15.6 15.6" stroke="#4a8af4" stroke-width="1.5" stroke-linecap="round"/></svg>
<div style="position:absolute;left:660px;top:789px;font-size:13px;line-height:15px;height:15px;color:#666666;font-weight:400;white-space:nowrap;letter-spacing:-0.25px;width:157px;text-align:left;overflow:hidden;">disc.png</div>
<div style="position:absolute;left:823px;top:789px;font-size:13px;line-height:15px;height:15px;color:#666666;font-weight:400;white-space:nowrap;letter-spacing:-0.25px;width:64px;text-align:left;overflow:hidden;">Disc art</div>
<div style="position:absolute;left:888px;top:789px;font-size:13px;line-height:15px;height:15px;color:#666666;font-weight:400;white-space:nowrap;letter-spacing:-0.25px;width:58px;text-align:right;overflow:hidden;">1.08 M</div>
<div style="position:absolute;left:956px;top:789px;font-size:13px;line-height:15px;height:15px;color:#666666;font-weight:400;white-space:nowrap;letter-spacing:-0.25px;width:73px;text-align:left;overflow:hidden;">PNG</div>
<div style="position:absolute;left:1115px;top:789px;font-size:13px;line-height:15px;height:15px;color:#666666;font-weight:400;white-space:nowrap;letter-spacing:-0.25px;width:72px;text-align:left;overflow:hidden;">1000x1000</div>
<div style="position:absolute;left:1338px;top:789px;font-size:13px;line-height:15px;height:15px;color:#666666;font-weight:400;white-space:nowrap;letter-spacing:-0.25px;width:36px;text-align:left;overflow:hidden;">06.01.2</div>
<div style="position:absolute;left:630px;top:828px;width:744px;height:1px;background:#c2c2c2;"></div>
<div style="position:absolute;left:654px;top:808px;width:1px;height:21px;background:#c8c8c8;"></div>
<div style="position:absolute;left:817px;top:808px;width:1px;height:21px;background:#c8c8c8;"></div>
<div style="position:absolute;left:887px;top:808px;width:1px;height:21px;background:#c8c8c8;"></div>
<div style="position:absolute;left:950px;top:808px;width:1px;height:21px;background:#c8c8c8;"></div>
<div style="position:absolute;left:1029px;top:808px;width:1px;height:21px;background:#c8c8c8;"></div>
<div style="position:absolute;left:1109px;top:808px;width:1px;height:21px;background:#c8c8c8;"></div>
<div style="position:absolute;left:1187px;top:808px;width:1px;height:21px;background:#c8c8c8;"></div>
<div style="position:absolute;left:1268px;top:808px;width:1px;height:21px;background:#c8c8c8;"></div>
<div style="position:absolute;left:1332px;top:808px;width:1px;height:21px;background:#c8c8c8;"></div>
<svg style="position:absolute;left:630.5px;top:808.5px;" width="18" height="18" viewBox="0 0 18 18"><circle cx="7.6" cy="7.4" r="4.7" fill="none" stroke="#4a8af4" stroke-width="1.3"/><path d="M11 10.9 L15.6 15.6" stroke="#4a8af4" stroke-width="1.5" stroke-linecap="round"/></svg>
<div style="position:absolute;left:660px;top:811px;font-size:13px;line-height:15px;height:15px;color:#666666;font-weight:400;white-space:nowrap;letter-spacing:-0.25px;width:157px;text-align:left;overflow:hidden;">clearlogo.png</div>
<div style="position:absolute;left:823px;top:811px;font-size:13px;line-height:15px;height:15px;color:#666666;font-weight:400;white-space:nowrap;letter-spacing:-0.25px;width:64px;text-align:left;overflow:hidden;">Clearlogo</div>
<div style="position:absolute;left:888px;top:811px;font-size:13px;line-height:15px;height:15px;color:#666666;font-weight:400;white-space:nowrap;letter-spacing:-0.25px;width:58px;text-align:right;overflow:hidden;">276.57 k</div>
<div style="position:absolute;left:956px;top:811px;font-size:13px;line-height:15px;height:15px;color:#666666;font-weight:400;white-space:nowrap;letter-spacing:-0.25px;width:73px;text-align:left;overflow:hidden;">PNG</div>
<div style="position:absolute;left:1115px;top:811px;font-size:13px;line-height:15px;height:15px;color:#666666;font-weight:400;white-space:nowrap;letter-spacing:-0.25px;width:72px;text-align:left;overflow:hidden;">800x310</div>
<div style="position:absolute;left:1338px;top:811px;font-size:13px;line-height:15px;height:15px;color:#666666;font-weight:400;white-space:nowrap;letter-spacing:-0.25px;width:36px;text-align:left;overflow:hidden;">06.01.2</div>
<div style="position:absolute;left:630px;top:850px;width:744px;height:1px;background:#c2c2c2;"></div>
<div style="position:absolute;left:654px;top:830px;width:1px;height:21px;background:#c8c8c8;"></div>
<div style="position:absolute;left:817px;top:830px;width:1px;height:21px;background:#c8c8c8;"></div>
<div style="position:absolute;left:887px;top:830px;width:1px;height:21px;background:#c8c8c8;"></div>
<div style="position:absolute;left:950px;top:830px;width:1px;height:21px;background:#c8c8c8;"></div>
<div style="position:absolute;left:1029px;top:830px;width:1px;height:21px;background:#c8c8c8;"></div>
<div style="position:absolute;left:1109px;top:830px;width:1px;height:21px;background:#c8c8c8;"></div>
<div style="position:absolute;left:1187px;top:830px;width:1px;height:21px;background:#c8c8c8;"></div>
<div style="position:absolute;left:1268px;top:830px;width:1px;height:21px;background:#c8c8c8;"></div>
<div style="position:absolute;left:1332px;top:830px;width:1px;height:21px;background:#c8c8c8;"></div>
<svg style="position:absolute;left:630.5px;top:830.5px;" width="18" height="18" viewBox="0 0 18 18"><circle cx="7.6" cy="7.4" r="4.7" fill="none" stroke="#4a8af4" stroke-width="1.3"/><path d="M11 10.9 L15.6 15.6" stroke="#4a8af4" stroke-width="1.5" stroke-linecap="round"/></svg>
<div style="position:absolute;left:660px;top:833px;font-size:13px;line-height:15px;height:15px;color:#666666;font-weight:400;white-space:nowrap;letter-spacing:-0.25px;width:157px;text-align:left;overflow:hidden;">logo.png</div>
<div style="position:absolute;left:823px;top:833px;font-size:13px;line-height:15px;height:15px;color:#666666;font-weight:400;white-space:nowrap;letter-spacing:-0.25px;width:64px;text-align:left;overflow:hidden;">Clearlogo</div>
<div style="position:absolute;left:888px;top:833px;font-size:13px;line-height:15px;height:15px;color:#666666;font-weight:400;white-space:nowrap;letter-spacing:-0.25px;width:58px;text-align:right;overflow:hidden;">276.57 k</div>
<div style="position:absolute;left:956px;top:833px;font-size:13px;line-height:15px;height:15px;color:#666666;font-weight:400;white-space:nowrap;letter-spacing:-0.25px;width:73px;text-align:left;overflow:hidden;">PNG</div>
<div style="position:absolute;left:1115px;top:833px;font-size:13px;line-height:15px;height:15px;color:#666666;font-weight:400;white-space:nowrap;letter-spacing:-0.25px;width:72px;text-align:left;overflow:hidden;">800x310</div>
<div style="position:absolute;left:1338px;top:833px;font-size:13px;line-height:15px;height:15px;color:#666666;font-weight:400;white-space:nowrap;letter-spacing:-0.25px;width:36px;text-align:left;overflow:hidden;">06.01.2</div>
<div style="position:absolute;left:654px;top:852px;width:1px;height:16px;background:#c8c8c8;"></div>
<div style="position:absolute;left:817px;top:852px;width:1px;height:16px;background:#c8c8c8;"></div>
<div style="position:absolute;left:887px;top:852px;width:1px;height:16px;background:#c8c8c8;"></div>
<div style="position:absolute;left:950px;top:852px;width:1px;height:16px;background:#c8c8c8;"></div>
<div style="position:absolute;left:1029px;top:852px;width:1px;height:16px;background:#c8c8c8;"></div>
<div style="position:absolute;left:1109px;top:852px;width:1px;height:16px;background:#c8c8c8;"></div>
<div style="position:absolute;left:1187px;top:852px;width:1px;height:16px;background:#c8c8c8;"></div>
<div style="position:absolute;left:1268px;top:852px;width:1px;height:16px;background:#c8c8c8;"></div>
<div style="position:absolute;left:1332px;top:852px;width:1px;height:16px;background:#c8c8c8;"></div>
<svg style="position:absolute;left:630.5px;top:852.5px;clip-path:inset(0 0 2.5px 0);" width="18" height="18" viewBox="0 0 18 18"><circle cx="7.6" cy="7.4" r="4.7" fill="none" stroke="#4a8af4" stroke-width="1.3"/><path d="M11 10.9 L15.6 15.6" stroke="#4a8af4" stroke-width="1.5" stroke-linecap="round"/></svg>
<div style="position:absolute;left:660px;top:855px;font-size:13px;line-height:15px;height:15px;color:#666666;font-weight:400;white-space:nowrap;letter-spacing:-0.25px;width:157px;text-align:left;overflow:hidden;clip-path:inset(0 0 2px 0);">thumb.jpg</div>
<div style="position:absolute;left:823px;top:855px;font-size:13px;line-height:15px;height:15px;color:#666666;font-weight:400;white-space:nowrap;letter-spacing:-0.25px;width:64px;text-align:left;overflow:hidden;clip-path:inset(0 0 2px 0);">Thumb</div>
<div style="position:absolute;left:888px;top:855px;font-size:13px;line-height:15px;height:15px;color:#666666;font-weight:400;white-space:nowrap;letter-spacing:-0.25px;width:58px;text-align:right;overflow:hidden;clip-path:inset(0 0 2px 0);">499.34 k</div>
<div style="position:absolute;left:956px;top:855px;font-size:13px;line-height:15px;height:15px;color:#666666;font-weight:400;white-space:nowrap;letter-spacing:-0.25px;width:73px;text-align:left;overflow:hidden;clip-path:inset(0 0 2px 0);">JPEG</div>
<div style="position:absolute;left:1115px;top:855px;font-size:13px;line-height:15px;height:15px;color:#666666;font-weight:400;white-space:nowrap;letter-spacing:-0.25px;width:72px;text-align:left;overflow:hidden;clip-path:inset(0 0 2px 0);">1000x562</div>
<div style="position:absolute;left:1338px;top:855px;font-size:13px;line-height:15px;height:15px;color:#666666;font-weight:400;white-space:nowrap;letter-spacing:-0.25px;width:36px;text-align:left;overflow:hidden;clip-path:inset(0 0 2px 0);">06.01.2</div>
<div style="position:absolute;left:1374px;top:607px;width:1px;height:261px;background:#c8c8c8;"></div>
<div style="position:absolute;left:625px;top:868px;width:750px;height:1px;background:#c2c2c2;"></div>
<svg style="position:absolute;left:1375.5px;top:610px;" width="16" height="16" viewBox="0 0 16 16"><path d="M10.9 1.6 C8.6 1.2 6.9 3.4 7.7 5.6 L1.7 11.6 C0.9 12.4 0.9 13.5 1.6 14.2 C2.3 14.9 3.4 14.9 4.2 14.1 L10.2 8.1 C12.4 8.9 14.6 7.2 14.2 4.9 L12.2 6.9 L9.9 5.9 L8.9 3.6 Z" fill="none" stroke="#666666" stroke-width="1.25" stroke-linejoin="round"/><circle cx="2.9" cy="12.9" r="0.5" fill="#666666"/></svg>
<div style="position:absolute;left:1379px;top:635px;width:8px;height:231px;background:#fff;border-radius:4px"></div>
<div style="position:absolute;left:1380px;top:636px;width:6px;height:42px;background:#848484;border-radius:3px"></div>
<div style="position:absolute;left:629px;top:873px;width:741px;height:8px;background:#fff;border-radius:4px"></div>
<div style="position:absolute;left:631px;top:874px;width:42px;height:6px;background:#848484;border-radius:3px"></div>
<div style="position:absolute;left:984px;top:898px;font-size:13px;line-height:15px;height:15px;color:#666666;font-weight:400;white-space:nowrap;letter-spacing:-0.25px;width:200px;text-align:right;overflow:hidden;">Downloading images</div>
<div style="position:absolute;left:1191px;top:903px;width:100px;height:6px;background:#d2d2d2;border-radius:3px"></div>
<div style="position:absolute;left:1191px;top:903px;width:92px;height:6px;background:#8ea5b4;border-radius:3px"></div>
<div style="position:absolute;left:1324px;top:893px;width:22px;height:26px;background:#d4d4d4;"></div>
<div style="position:absolute;left:1324px;top:898px;font-size:13px;line-height:15px;height:15px;color:#666666;font-weight:400;white-space:nowrap;letter-spacing:-0.25px;width:94px;text-align:center;overflow:hidden;">242 / 1024M</div>
</div></body></html>
